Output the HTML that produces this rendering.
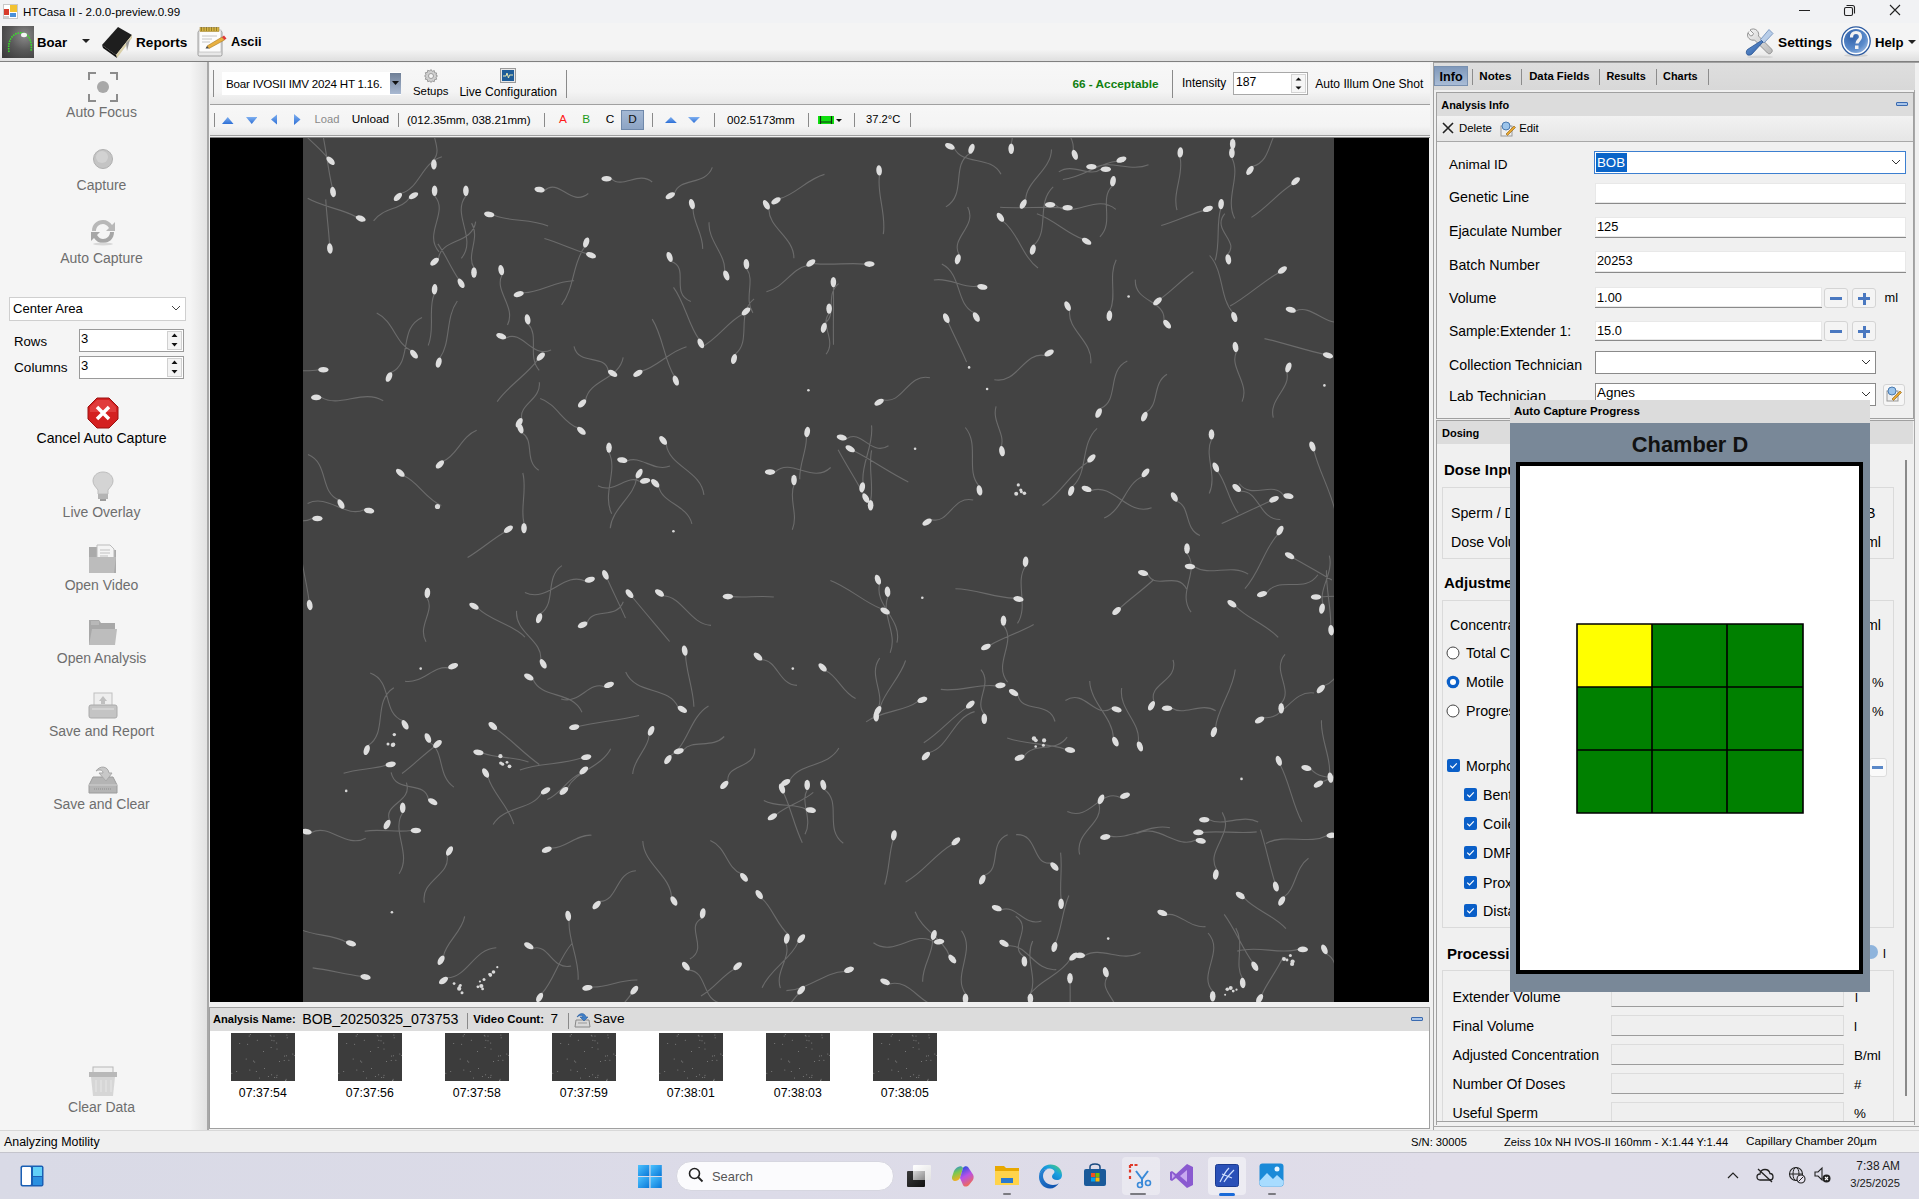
<!DOCTYPE html>
<html><head><meta charset="utf-8">
<style>
*{box-sizing:border-box;margin:0;padding:0}
html,body{width:1919px;height:1199px;overflow:hidden;background:#f0f0f0;font-family:"Liberation Sans",sans-serif;color:#000}
.a{position:absolute}
.t{position:absolute;white-space:nowrap;line-height:1}
.b{font-weight:bold}
</style></head><body>
<!-- title bar -->
<div class="a" style="left:0;top:0;width:1919px;height:23px;background:#f1f2f4"></div>
<!-- ribbon toolbar -->
<div class="a" style="left:0;top:23px;width:1919px;height:38px;background:linear-gradient(#f4f4f4 0,#f4f4f4 70%,#dfdfdf 100%)"></div>
<div class="a" style="left:0;top:61px;width:1919px;height:1px;background:#808080"></div>
<!-- left panel -->
<div class="a" style="left:0;top:62px;width:208px;height:1068px;background:linear-gradient(90deg,#f5f5f5 0,#f5f5f5 190px,#e2e2e2 207px)"></div>
<div class="a" style="left:207px;top:62px;width:2px;height:1068px;background:#a8a8a8"></div>
<!-- center toolbars -->
<div class="a" style="left:209px;top:62px;width:1222px;height:76px;background:#f0f0f0"></div>
<div class="a" style="left:210px;top:63px;width:1220px;height:41px;background:linear-gradient(#f7f7f7 0,#f4f4f4 70%,#e6e6e6 100%)"></div>
<div class="a" style="left:210px;top:104px;width:1220px;height:1px;background:#a0a0a0"></div>
<div class="a" style="left:210px;top:105px;width:1220px;height:30px;background:linear-gradient(#f7f7f7 0,#f4f4f4 70%,#e6e6e6 100%)"></div>
<div class="a" style="left:210px;top:135px;width:1220px;height:1px;background:#a0a0a0"></div>
<!-- image -->
<div class="a" style="left:210px;top:137px;width:1220px;height:1px;background:#808080"></div>
<div class="a" style="left:210px;top:138px;width:1219px;height:864px;background:#000"></div>
<div class="a" style="left:303px;top:138px;width:1031px;height:864px;background:#434343;overflow:hidden">
<svg width="1031" height="864" style="position:absolute;left:0;top:0"><defs><filter id="gl" x="-50%" y="-50%" width="200%" height="200%"><feGaussianBlur stdDeviation="0.7"/></filter><filter id="tb" x="-20%" y="-20%" width="140%" height="140%"><feGaussianBlur stdDeviation="0.4"/></filter></defs><path d="M24.1 19.3C15.3 7.8 -0.9 -3.5 -11.1 -16.8 M29.2 49.1C24.9 31.4 22.8 8.2 18.2 -11.1 M53.0 78.8C40.0 71.1 19.6 69.0 4.7 60.3 M26.5 105.5C25.8 93.3 23.6 76.2 22.7 61.4 M98.4 55.3C116.2 50.8 119.0 24.1 138.9 18.8 M106.2 60.2C99.3 71.4 79.4 69.8 70.6 82.9 M130.9 21.4C140.8 9.9 123.0 -6.5 133.9 -20.7 M131.6 57.8C146.3 74.2 119.9 95.5 136.0 113.8 M162.9 57.8C148.0 76.5 174.8 100.2 158.4 120.4 M191.1 77.3C206.2 83.7 228.1 80.8 245.1 87.9 M241.5 52.5C256.1 39.3 268.0 69.8 285.3 55.5 M135.5 120.5C137.9 100.1 169.5 106.6 172.7 83.7 M171.0 129.5C162.8 117.2 177.6 100.0 168.6 85.1 M155.6 141.0C149.1 132.1 142.9 117.2 134.9 105.9 M199.0 137.0C190.7 153.0 213.5 168.6 204.5 187.0 M220.5 154.8C236.1 155.3 253.3 142.4 271.1 142.7 M131.2 156.3C124.7 170.6 132.3 191.1 125.2 207.5 M107.8 212.4C93.0 205.9 90.3 182.8 73.7 175.0 M88.1 234.5C110.4 224.2 94.6 190.5 119.0 179.4 M137.0 219.8C148.0 204.6 142.2 179.7 154.3 163.0 M225.5 186.3C236.3 197.9 224.1 218.6 236.2 232.4 M202.9 199.9C219.9 191.4 228.4 220.9 248.1 212.0 M234.3 222.1C224.6 236.3 205.0 247.8 194.2 263.6 M15.4 231.8C-2.1 235.4 -24.7 228.9 -44.1 232.9 M18.2 259.4C36.7 270.5 60.1 250.5 80.2 262.8 M218.7 280.3C216.0 266.4 238.4 261.1 236.3 244.3 M276.1 588.3C293.8 584.3 316.8 582.0 336.1 577.5 M278.3 620.1C260.5 626.6 236.2 624.9 216.9 631.9 M277.0 635.7C265.6 639.8 257.9 656.0 244.3 661.5 M264.7 649.7C273.0 633.1 298.4 629.1 307.7 610.7 M346.0 597.3C346.0 610.0 330.3 620.8 329.7 636.1 M367.8 617.5C385.1 607.1 386.5 579.3 405.5 568.0 M380.5 611.9C389.7 601.1 409.6 610.9 421.2 598.5 M424.9 643.3C423.1 625.2 452.7 631.4 451.8 610.4 M486.9 642.0C496.6 624.4 525.1 629.4 535.9 610.1 M480.7 655.2C487.5 668.9 491.6 689.0 499.3 704.7 M504.2 651.9C496.8 664.1 510.2 681.4 502.0 696.2 M502.9 671.2C492.1 664.6 474.1 669.9 460.8 662.4 M473.7 676.3C482.6 668.3 499.3 663.9 510.3 654.3 M437.8 735.5C424.2 730.7 423.1 708.8 407.3 702.5 M368.4 758.6C367.5 737.6 340.6 726.0 339.8 703.1 M297.1 763.4C315.1 762.8 312.3 734.3 332.9 732.8 M459.0 760.7C469.0 769.0 474.0 786.8 485.6 796.9 M266.1 782.7C264.7 800.8 276.6 821.7 275.1 841.7 M398.9 780.3C381.4 789.0 406.3 810.2 386.9 821.1 M482.9 805.5C488.4 819.1 471.6 833.9 477.4 850.1 M495.0 804.4C488.3 820.9 466.6 831.4 459.1 849.7 M386.1 832.1C405.0 833.3 397.9 863.0 419.4 865.3 M430.7 831.4C420.2 836.8 410.7 851.0 398.0 857.9 M289.3 849.0C302.4 850.0 318.8 841.1 334.4 842.0 M328.1 856.1C320.4 867.6 306.3 880.2 297.2 893.6 M495.0 856.1C483.5 870.6 467.7 887.9 455.2 903.7 M573.2 573.4C584.9 558.0 563.8 537.7 576.7 520.2 M681.3 575.8C670.2 563.6 690.1 546.4 677.9 531.6 M626.4 614.5C646.4 608.9 649.8 579.7 671.6 573.6 M762.1 611.2C745.5 605.1 722.5 606.7 704.2 600.0 M721.3 618.0C730.0 603.8 753.5 615.1 764.1 599.1 M521.6 651.7C539.2 664.1 520.8 691.3 540.3 705.3 M590.1 702.2C586.0 714.3 586.3 732.2 581.7 746.7 M649.1 706.5C633.2 715.0 620.2 734.6 602.7 744.0 M681.5 737.2C699.1 731.1 684.9 704.6 704.7 696.8 M747.9 725.0C728.2 727.2 735.6 695.2 713.0 696.7 M758.1 760.8C756.4 747.8 759.5 729.9 757.6 714.6 M698.5 771.8C712.6 765.9 721.4 789.0 738.4 783.0 M752.7 804.2C758.5 791.5 759.3 772.4 765.9 757.5 M629.5 801.8C630.7 814.4 618.7 828.6 619.7 843.7 M631.1 804.2C611.9 790.4 591.5 820.0 570.5 804.8 M646.1 817.2C640.5 801.0 618.5 791.9 612.1 773.8 M705.3 807.9C724.4 805.7 731.8 833.8 753.3 831.6 M720.9 818.4C704.6 808.8 730.9 790.4 712.8 778.2 M541.3 833.5C522.1 833.7 504.4 852.4 483.4 852.6 M586.6 845.9C609.8 839.9 619.5 874.8 644.9 868.0 M767.0 845.2C767.6 861.1 766.6 882.0 767.2 899.9 M766.8 821.8C757.8 837.0 734.5 842.9 724.4 859.7 M662.5 855.7C648.9 836.9 673.4 813.1 658.5 792.7 M727.4 855.7C735.0 840.5 721.3 820.4 729.7 803.1 M810.3 599.1C809.6 579.6 787.5 564.5 786.7 543.1 M835.2 603.7C838.4 585.1 815.2 570.7 818.7 550.0 M912.6 589.3C914.4 570.7 930.3 551.9 932.2 531.5 M960.9 579.5C981.4 582.5 988.3 551.9 1011.1 555.0 M977.5 627.5C986.1 643.3 989.4 666.3 998.8 683.7 M1008.2 631.3C1021.8 647.0 1048.5 632.5 1063.5 649.8 M1026.6 634.7C1027.8 618.9 1017.2 600.1 1018.5 582.2 M1019.7 643.6C1033.0 639.0 1047.0 625.5 1062.4 619.9 M795.9 665.8C801.5 685.7 770.8 694.2 776.7 716.5 M817.3 659.4C797.0 650.0 787.1 683.8 764.3 673.6 M807.3 698.1C826.1 702.2 846.3 685.3 867.0 689.8 M906.3 681.7C920.2 689.2 939.1 675.7 955.2 683.9 M900.3 694.4C915.7 692.5 936.2 695.9 953.7 693.9 M892.8 702.0C873.2 712.0 855.2 684.5 833.7 695.6 M913.7 731.5C901.8 712.4 932.3 695.6 919.2 674.4 M971.6 743.6C967.0 728.7 962.7 708.6 957.5 691.7 M981.2 758.6C993.0 750.8 991.9 729.9 1005.5 720.3 M941.4 760.2C951.4 771.7 971.4 777.6 982.9 790.6 M1023.6 697.7C1006.2 707.1 981.9 695.1 962.9 705.4 M864.0 776.6C876.3 774.3 887.3 790.5 902.5 788.6 M781.9 817.4C798.1 807.9 819.3 825.0 837.5 814.6 M804.1 839.1C794.7 854.1 821.7 864.6 811.7 882.5 M949.3 823.9C939.6 810.9 932.0 791.0 921.2 776.4 M994.8 811.4C976.9 816.9 953.9 807.0 934.3 813.1 M1023.5 815.9C1038.6 823.2 1028.9 847.6 1046.0 856.6 M939.3 840.1C930.9 826.4 942.1 805.9 932.8 790.1 M909.7 853.2C894.3 836.1 922.0 814.0 905.1 795.0 M959.1 856.3C963.7 845.3 974.4 832.1 980.2 818.8 M308.6 40.8C319.6 51.4 335.5 32.4 349.2 44.0 M371.6 55.2C376.8 38.9 402.5 48.0 409.3 29.4 M390.2 70.9C389.1 82.7 400.5 96.4 399.6 110.9 M477.3 60.4C491.8 56.9 504.8 40.7 521.5 36.4 M465.9 71.1C465.4 89.9 491.2 99.3 490.9 120.3 M281.5 109.2C269.6 124.5 271.6 150.2 258.6 166.9 M283.3 115.5C271.4 112.0 255.6 104.8 241.4 100.5 M368.3 123.6C387.2 129.7 366.6 155.5 387.8 163.4 M421.6 132.7C423.0 116.7 404.7 102.5 406.1 84.2 M443.9 131.1C452.2 142.6 440.6 160.9 449.9 174.9 M503.7 127.8C489.0 130.4 480.4 150.3 463.4 153.7 M439.1 176.6C425.3 183.4 414.3 201.3 398.6 209.2 M395.7 200.8C385.5 187.0 381.8 164.6 370.5 149.3 M432.2 216.2C449.2 203.0 432.4 175.6 451.1 160.9 M305.3 232.9C302.3 215.2 275.6 228.5 271.0 208.3 M282.7 261.9C286.0 241.8 316.3 241.6 320.2 219.4 M339.2 232.9C353.7 229.2 366.9 213.2 383.5 208.7 M371.1 237.9C361.2 222.3 360.0 198.2 349.2 181.1 M651.4 10.5C660.2 28.0 687.9 16.8 698.0 36.3 M666.8 15.5C647.6 26.8 664.1 56.4 642.9 68.9 M708.2 5.8C713.0 -8.7 704.3 -28.2 709.6 -44.9 M770.1 12.1C772.5 -2.0 754.6 -13.9 756.8 -30.6 M576.5 37.4C573.5 55.1 583.6 76.6 580.3 96.1 M722.7 61.7C723.0 42.8 748.1 32.4 748.5 11.4 M752.1 66.8C770.1 82.2 793.1 54.5 812.8 71.4 M759.6 69.7C741.0 68.5 717.4 70.6 697.1 69.3 M700.2 83.4C714.8 94.1 719.0 118.1 735.0 130.0 M731.1 106.9C746.8 92.4 732.9 64.8 750.2 48.9 M656.1 116.5C646.7 99.9 674.8 88.2 664.7 69.1 M561.4 126.1C547.1 124.5 527.8 127.4 511.3 125.6 M530.4 149.1C530.8 166.1 530.1 188.0 530.5 206.8 M526.1 175.6C516.2 186.5 534.0 202.5 523.1 216.2 M522.1 184.9C534.3 176.5 521.8 156.4 535.6 145.6 M674.4 148.1C661.5 151.2 646.3 138.8 630.8 142.0 M670.8 174.6C652.3 165.6 659.2 136.1 638.8 126.0 M645.4 184.7C650.0 195.7 658.0 210.7 663.6 224.1 M766.7 172.7C763.9 192.3 790.7 203.6 787.7 225.4 M741.8 217.5C720.5 213.3 714.9 246.2 691.3 241.7 M580.4 261.7C600.3 266.8 604.5 234.6 627.0 239.8 M797.8 31.2C786.4 40.1 769.9 24.1 755.8 33.9 M793.4 28.8C808.4 22.1 828.4 34.2 845.5 26.8 M813.7 23.3C796.6 24.8 779.0 39.7 759.9 41.5 M809.2 48.2C795.7 61.0 811.8 84.1 796.9 98.8 M876.9 19.4C881.5 35.1 869.0 54.4 874.0 72.2 M929.7 1.0C940.7 -12.8 920.8 -31.6 933.0 -47.8 M928.9 19.9C938.3 37.9 921.5 60.9 931.7 80.6 M949.8 28.3C972.2 22.5 963.1 -11.5 987.7 -17.9 M988.8 46.5C975.8 54.3 963.2 70.3 948.4 79.4 M900.2 72.6C888.2 75.7 872.6 83.6 858.2 87.5 M917.7 71.0C913.0 85.5 917.4 105.7 912.2 122.3 M924.5 116.4C937.4 103.0 908.0 91.9 921.8 75.6 M779.3 100.8C764.8 96.1 750.4 81.2 733.9 75.7 M975.3 135.0C960.0 143.2 943.9 158.9 927.1 168.0 M806.9 172.8C814.2 158.7 805.0 138.1 813.2 121.8 M858.3 160.1C867.7 153.8 878.8 141.7 890.3 133.7 M860.9 182.3C863.0 162.1 830.6 164.4 832.4 141.6 M929.6 174.3C916.5 159.7 921.0 133.4 906.6 117.5 M992.6 173.0C1009.8 165.3 1023.1 191.1 1042.7 182.8 M933.4 213.9C925.9 229.7 947.2 245.5 939.1 263.6 M1020.2 216.1C1002.6 212.2 980.7 204.9 961.5 200.6 M983.7 234.1C988.4 250.0 965.4 261.1 970.3 279.6 M797.7 270.5C816.7 262.0 803.3 232.9 824.3 223.1 M843.4 274.1C856.5 267.2 849.0 245.2 864.0 236.3 M219.1 295.1C232.0 302.0 220.9 323.0 235.7 332.2 M140.5 322.9C153.6 318.2 158.4 298.2 173.7 292.2 M101.1 338.1C114.3 343.1 123.0 361.3 138.3 367.5 M35.5 361.7C16.6 354.4 26.0 325.1 5.0 316.6 M61.1 371.7C42.7 380.7 25.1 355.5 4.6 365.4 M9.4 380.5C-5.4 388.5 -25.3 374.1 -42.3 382.9 M201.3 394.2C190.6 400.4 177.4 411.8 164.6 419.5 M221.0 385.1C217.0 370.8 224.2 351.6 219.8 335.0 M5.9 462.0C4.3 448.0 -0.6 429.5 -2.5 413.2 M124.0 459.9C132.4 472.7 113.9 488.2 123.0 503.7 M175.4 470.7C186.9 482.4 208.9 485.9 221.9 499.1 M237.8 475.5C253.5 465.2 241.4 439.5 258.9 427.6 M237.7 521.5C239.8 502.2 211.6 494.6 213.6 472.9 M145.4 529.9C130.9 527.0 119.1 546.1 102.0 543.3 M230.1 541.5C238.6 561.3 269.5 552.4 279.0 574.2 M274.6 289.6C260.6 285.6 253.4 265.7 237.2 260.6 M306.0 314.6C315.1 332.8 298.8 356.0 308.7 375.8 M363.3 306.2C365.9 328.6 398.3 332.5 400.9 356.9 M324.2 323.0C337.3 316.8 351.2 334.5 367.0 328.0 M333.6 339.9C331.9 358.1 309.1 369.9 307.2 390.2 M337.1 343.6C323.9 335.2 311.0 356.9 295.0 347.8 M355.7 348.7C359.1 365.3 384.5 367.0 388.9 385.8 M503.3 298.9C504.4 311.1 495.9 326.6 496.8 341.3 M472.0 334.1C488.2 318.7 509.5 346.5 527.7 329.5 M491.0 347.0C485.2 359.4 495.7 376.8 489.3 391.7 M282.0 443.0C260.6 433.2 245.3 465.3 221.9 454.5 M304.6 441.5C309.3 452.1 316.7 467.1 322.5 480.1 M329.7 459.5C340.4 472.5 354.6 489.1 366.6 503.5 M360.6 457.8C379.6 459.0 386.8 485.9 408.0 487.4 M284.2 484.8C289.1 468.6 313.5 482.2 320.3 463.8 M429.9 458.6C441.0 460.2 457.0 457.2 470.8 459.0 M382.6 517.5C383.0 532.6 390.4 551.5 390.9 568.7 M458.8 521.8C474.4 521.8 475.7 546.6 494.0 547.4 M301.3 548.7C286.0 542.7 276.3 567.0 258.2 560.9 M375.0 568.9C365.6 547.8 332.8 557.2 322.7 534.0 M543.6 300.8C558.4 290.3 567.8 318.9 585.5 307.7 M551.6 313.3C568.1 321.5 587.3 335.1 605.3 343.9 M560.1 344.3C557.6 326.7 571.2 306.9 568.5 287.3 M560.3 355.7C553.5 342.9 543.0 326.5 535.1 311.7 M567.6 362.3C570.9 348.1 565.1 328.8 568.6 312.4 M698.2 308.3C702.6 296.5 688.5 282.9 693.1 268.3 M675.6 347.5C662.5 331.9 676.7 306.6 662.3 289.5 M769.9 348.2C785.5 334.0 777.1 305.7 794.1 290.3 M628.4 381.6C646.1 386.6 649.7 357.1 670.2 362.0 M722.1 428.7C711.8 444.6 725.9 467.7 714.5 485.4 M710.5 460.1C692.9 460.1 671.9 450.8 652.4 450.8 M576.6 446.4C571.3 467.5 599.7 481.6 593.9 504.6 M584.9 458.7C577.8 475.8 595.0 495.7 587.2 514.7 M577.7 470.5C561.6 464.6 545.3 449.0 527.4 442.4 M700.5 487.6C714.2 504.1 689.5 525.7 704.6 544.2 M687.5 506.9C699.3 500.3 716.8 494.1 730.7 486.4 M523.1 532.9C534.1 537.3 539.4 554.4 552.6 560.4 M692.4 547.9C676.2 545.3 656.0 554.2 637.8 551.4 M714.9 557.1C718.7 575.8 746.8 562.4 752.0 583.5 M614.6 563.6C601.2 573.9 578.2 572.4 563.1 583.9 M663.5 569.9C649.8 578.5 636.2 595.1 620.8 604.8 M577.4 568.3C581.8 553.5 597.3 539.4 602.6 522.5 M784.9 324.0C768.4 334.0 757.3 356.7 739.4 367.5 M839.2 338.7C822.3 345.8 820.1 371.9 801.2 380.1 M788.3 352.6C811.0 344.7 823.9 378.6 848.6 369.7 M908.5 301.4C900.9 317.1 914.6 337.8 906.2 355.6 M915.0 333.8C923.2 344.1 925.6 362.7 935.2 375.1 M873.8 363.2C887.8 368.0 880.7 390.7 896.9 397.4 M937.6 353.2C956.4 352.2 955.9 382.0 977.3 381.5 M980.5 357.3C970.1 342.3 948.6 362.2 936.1 345.5 M966.4 363.4C952.6 369.6 934.5 378.5 918.7 385.6 M1011.1 313.1C1015.4 331.3 1027.1 352.1 1031.8 371.8 M974.5 396.8C961.3 410.9 956.3 435.4 941.9 450.6 M884.0 415.5C897.6 432.8 873.2 455.0 888.1 474.1 M891.9 429.0C906.7 438.6 928.4 425.5 945.2 436.1 M844.9 436.3C852.1 452.5 874.0 432.7 883.5 450.9 M817.5 469.7C826.1 461.3 840.2 451.6 850.8 441.5 M990.9 420.2C1001.5 426.1 1016.2 434.9 1028.9 442.1 M963.8 454.9C975.3 437.2 1001.8 456.4 1014.9 436.8 M1018.0 459.0C1036.4 456.5 1059.7 461.1 1079.8 458.3 M933.0 468.6C943.5 479.8 963.1 486.6 975.2 499.3 M1019.9 465.6C1015.5 451.0 1030.9 434.7 1026.3 417.6 M1027.7 487.2C1028.2 471.1 1022.9 450.4 1023.5 432.3 M1021.4 547.5C1035.5 543.2 1039.4 521.6 1055.7 516.1 M808.8 570.2C792.1 581.8 781.8 550.0 762.4 562.5 M851.0 563.5C844.7 545.2 876.3 543.0 870.0 521.8 M869.1 570.2C881.1 578.4 898.1 563.7 912.7 572.7 M978.2 565.2C990.9 551.4 968.0 532.5 982.0 516.3 M99.6 582.5C78.7 575.1 90.3 543.3 67.2 535.1 M65.4 607.3C85.1 594.6 69.2 563.6 90.8 549.8 M127.0 604.6C141.7 613.6 134.4 638.4 150.9 649.1 M130.7 609.2C121.6 615.7 110.2 627.4 99.0 635.5 M82.8 627.3C71.5 631.2 54.4 630.8 40.6 635.3 M193.6 591.2C206.9 600.5 221.4 616.0 236.3 626.5 M180.3 615.3C192.5 620.1 210.9 618.6 225.5 624.1 M185.1 639.2C189.1 654.7 206.0 668.7 210.8 686.2 M238.3 655.4C228.7 672.4 200.9 667.8 190.1 686.6 M125.4 661.2C122.0 641.5 92.8 656.6 88.1 634.3 M99.7 674.7C87.6 692.8 109.4 715.9 96.1 735.7 M86.6 682.2C79.9 665.6 109.9 664.3 103.4 644.6 M107.9 692.5C95.0 694.9 77.0 690.6 61.7 693.2 M8.5 694.6C26.3 684.8 42.7 710.9 62.7 700.2 M144.0 717.3C148.3 737.2 116.9 742.3 121.4 764.7 M248.5 710.0C261.2 711.4 273.2 696.2 288.5 697.2 M43.2 804.1C29.6 796.1 8.2 798.2 -7.3 789.3 M57.5 838.2C43.9 836.5 25.6 832.0 9.7 829.9 M140.6 817.9C142.5 804.6 159.0 794.0 161.7 778.3 M144.6 839.8C164.6 839.0 171.2 810.6 193.3 809.7 M230.1 810.3C246.0 805.4 249.2 832.6 268.1 828.0 M239.1 855.1C251.2 842.1 256.1 819.3 269.4 805.0" stroke="#8c8c8c" stroke-width="1.1" fill="none" opacity="0.55" filter="url(#tb)"/><g fill="#dedede" filter="url(#gl)"><ellipse cx="27.6" cy="22.8" rx="5.2" ry="2.8" transform="rotate(-135 27.6 22.8)"/><ellipse cx="30.0" cy="54.0" rx="5.2" ry="2.8" transform="rotate(-100 30.0 54.0)"/><ellipse cx="57.7" cy="80.5" rx="5.2" ry="2.8" transform="rotate(-160 57.7 80.5)"/><ellipse cx="26.9" cy="110.5" rx="5.2" ry="2.8" transform="rotate(-95 26.9 110.5)"/><ellipse cx="94.9" cy="58.9" rx="5.2" ry="2.8" transform="rotate(-45 94.9 58.9)"/><ellipse cx="110.5" cy="57.7" rx="5.2" ry="2.8" transform="rotate(150 110.5 57.7)"/><ellipse cx="130.9" cy="26.4" rx="5.2" ry="2.8" transform="rotate(-90 130.9 26.4)"/><ellipse cx="131.6" cy="52.8" rx="5.2" ry="2.8" transform="rotate(90 131.6 52.8)"/><ellipse cx="162.9" cy="52.8" rx="5.2" ry="2.8" transform="rotate(90 162.9 52.8)"/><ellipse cx="186.2" cy="76.4" rx="5.2" ry="2.8" transform="rotate(10 186.2 76.4)"/><ellipse cx="236.6" cy="51.6" rx="5.2" ry="2.8" transform="rotate(10 236.6 51.6)"/><ellipse cx="131.6" cy="123.7" rx="5.2" ry="2.8" transform="rotate(-40 131.6 123.7)"/><ellipse cx="171.0" cy="134.5" rx="5.2" ry="2.8" transform="rotate(-90 171.0 134.5)"/><ellipse cx="158.1" cy="145.3" rx="5.2" ry="2.8" transform="rotate(-120 158.1 145.3)"/><ellipse cx="198.2" cy="132.1" rx="5.2" ry="2.8" transform="rotate(80 198.2 132.1)"/><ellipse cx="215.7" cy="156.1" rx="5.2" ry="2.8" transform="rotate(-15 215.7 156.1)"/><ellipse cx="131.6" cy="151.3" rx="5.2" ry="2.8" transform="rotate(95 131.6 151.3)"/><ellipse cx="111.0" cy="216.2" rx="5.2" ry="2.8" transform="rotate(-130 111.0 216.2)"/><ellipse cx="86.0" cy="239.0" rx="5.2" ry="2.8" transform="rotate(-65 86.0 239.0)"/><ellipse cx="135.7" cy="224.6" rx="5.2" ry="2.8" transform="rotate(-75 135.7 224.6)"/><ellipse cx="224.6" cy="181.4" rx="5.2" ry="2.8" transform="rotate(80 224.6 181.4)"/><ellipse cx="198.2" cy="198.2" rx="5.2" ry="2.8" transform="rotate(20 198.2 198.2)"/><ellipse cx="237.8" cy="218.6" rx="5.2" ry="2.8" transform="rotate(135 237.8 218.6)"/><ellipse cx="20.4" cy="231.8" rx="5.2" ry="2.8" transform="rotate(180 20.4 231.8)"/><ellipse cx="13.2" cy="259.4" rx="5.2" ry="2.8" transform="rotate(0 13.2 259.4)"/><ellipse cx="216.2" cy="284.7" rx="5.2" ry="2.8" transform="rotate(-60 216.2 284.7)"/><ellipse cx="271.2" cy="589.2" rx="5.2" ry="2.8" transform="rotate(-10 271.2 589.2)"/><ellipse cx="283.2" cy="619.2" rx="5.2" ry="2.8" transform="rotate(170 283.2 619.2)"/><ellipse cx="280.8" cy="632.4" rx="5.2" ry="2.8" transform="rotate(140 280.8 632.4)"/><ellipse cx="260.9" cy="652.9" rx="5.2" ry="2.8" transform="rotate(-40 260.9 652.9)"/><ellipse cx="348.1" cy="592.8" rx="5.2" ry="2.8" transform="rotate(115 348.1 592.8)"/><ellipse cx="364.9" cy="621.6" rx="5.2" ry="2.8" transform="rotate(-55 364.9 621.6)"/><ellipse cx="375.7" cy="613.2" rx="5.2" ry="2.8" transform="rotate(-15 375.7 613.2)"/><ellipse cx="421.3" cy="646.9" rx="5.2" ry="2.8" transform="rotate(-45 421.3 646.9)"/><ellipse cx="482.6" cy="644.5" rx="5.2" ry="2.8" transform="rotate(-30 482.6 644.5)"/><ellipse cx="479.0" cy="650.5" rx="5.2" ry="2.8" transform="rotate(70 479.0 650.5)"/><ellipse cx="504.2" cy="646.9" rx="5.2" ry="2.8" transform="rotate(90 504.2 646.9)"/><ellipse cx="507.8" cy="672.1" rx="5.2" ry="2.8" transform="rotate(-170 507.8 672.1)"/><ellipse cx="469.4" cy="678.8" rx="5.2" ry="2.8" transform="rotate(-30 469.4 678.8)"/><ellipse cx="441.0" cy="739.3" rx="5.2" ry="2.8" transform="rotate(-130 441.0 739.3)"/><ellipse cx="370.9" cy="762.9" rx="5.2" ry="2.8" transform="rotate(-120 370.9 762.9)"/><ellipse cx="293.6" cy="767.0" rx="5.2" ry="2.8" transform="rotate(-45 293.6 767.0)"/><ellipse cx="456.2" cy="756.6" rx="5.2" ry="2.8" transform="rotate(55 456.2 756.6)"/><ellipse cx="265.2" cy="777.8" rx="5.2" ry="2.8" transform="rotate(80 265.2 777.8)"/><ellipse cx="399.7" cy="775.4" rx="5.2" ry="2.8" transform="rotate(100 399.7 775.4)"/><ellipse cx="483.8" cy="800.6" rx="5.2" ry="2.8" transform="rotate(100 483.8 800.6)"/><ellipse cx="498.2" cy="800.6" rx="5.2" ry="2.8" transform="rotate(130 498.2 800.6)"/><ellipse cx="382.9" cy="828.2" rx="5.2" ry="2.8" transform="rotate(50 382.9 828.2)"/><ellipse cx="434.6" cy="828.2" rx="5.2" ry="2.8" transform="rotate(140 434.6 828.2)"/><ellipse cx="284.4" cy="849.8" rx="5.2" ry="2.8" transform="rotate(-10 284.4 849.8)"/><ellipse cx="331.3" cy="852.2" rx="5.2" ry="2.8" transform="rotate(130 331.3 852.2)"/><ellipse cx="498.2" cy="852.2" rx="5.2" ry="2.8" transform="rotate(130 498.2 852.2)"/><ellipse cx="573.2" cy="578.4" rx="5.2" ry="2.8" transform="rotate(-90 573.2 578.4)"/><ellipse cx="681.3" cy="580.8" rx="5.2" ry="2.8" transform="rotate(-90 681.3 580.8)"/><ellipse cx="622.9" cy="618.0" rx="5.2" ry="2.8" transform="rotate(-45 622.9 618.0)"/><ellipse cx="767.0" cy="612.0" rx="5.2" ry="2.8" transform="rotate(-170 767.0 612.0)"/><ellipse cx="716.6" cy="619.7" rx="5.2" ry="2.8" transform="rotate(-20 716.6 619.7)"/><ellipse cx="520.3" cy="646.9" rx="5.2" ry="2.8" transform="rotate(75 520.3 646.9)"/><ellipse cx="590.9" cy="697.3" rx="5.2" ry="2.8" transform="rotate(100 590.9 697.3)"/><ellipse cx="652.9" cy="703.3" rx="5.2" ry="2.8" transform="rotate(140 652.9 703.3)"/><ellipse cx="679.3" cy="741.7" rx="5.2" ry="2.8" transform="rotate(-65 679.3 741.7)"/><ellipse cx="751.4" cy="728.5" rx="5.2" ry="2.8" transform="rotate(-135 751.4 728.5)"/><ellipse cx="758.1" cy="765.8" rx="5.2" ry="2.8" transform="rotate(-90 758.1 765.8)"/><ellipse cx="693.8" cy="770.1" rx="5.2" ry="2.8" transform="rotate(20 693.8 770.1)"/><ellipse cx="751.4" cy="809.0" rx="5.2" ry="2.8" transform="rotate(-75 751.4 809.0)"/><ellipse cx="630.8" cy="797.0" rx="5.2" ry="2.8" transform="rotate(105 630.8 797.0)"/><ellipse cx="636.1" cy="803.7" rx="5.2" ry="2.8" transform="rotate(175 636.1 803.7)"/><ellipse cx="649.3" cy="821.0" rx="5.2" ry="2.8" transform="rotate(-130 649.3 821.0)"/><ellipse cx="701.0" cy="805.4" rx="5.2" ry="2.8" transform="rotate(30 701.0 805.4)"/><ellipse cx="721.4" cy="823.4" rx="5.2" ry="2.8" transform="rotate(-95 721.4 823.4)"/><ellipse cx="546.0" cy="831.8" rx="5.2" ry="2.8" transform="rotate(160 546.0 831.8)"/><ellipse cx="582.1" cy="843.8" rx="5.2" ry="2.8" transform="rotate(25 582.1 843.8)"/><ellipse cx="767.0" cy="840.2" rx="5.2" ry="2.8" transform="rotate(90 767.0 840.2)"/><ellipse cx="770.6" cy="818.6" rx="5.2" ry="2.8" transform="rotate(140 770.6 818.6)"/><ellipse cx="662.5" cy="860.7" rx="5.2" ry="2.8" transform="rotate(-90 662.5 860.7)"/><ellipse cx="727.4" cy="860.7" rx="5.2" ry="2.8" transform="rotate(-90 727.4 860.7)"/><ellipse cx="812.4" cy="603.6" rx="5.2" ry="2.8" transform="rotate(-115 812.4 603.6)"/><ellipse cx="836.9" cy="608.4" rx="5.2" ry="2.8" transform="rotate(-110 836.9 608.4)"/><ellipse cx="910.9" cy="594.0" rx="5.2" ry="2.8" transform="rotate(-70 910.9 594.0)"/><ellipse cx="956.6" cy="582.0" rx="5.2" ry="2.8" transform="rotate(-30 956.6 582.0)"/><ellipse cx="975.8" cy="622.8" rx="5.2" ry="2.8" transform="rotate(70 975.8 622.8)"/><ellipse cx="1003.4" cy="630.0" rx="5.2" ry="2.8" transform="rotate(15 1003.4 630.0)"/><ellipse cx="1027.4" cy="639.7" rx="5.2" ry="2.8" transform="rotate(-100 1027.4 639.7)"/><ellipse cx="1015.4" cy="646.1" rx="5.2" ry="2.8" transform="rotate(-30 1015.4 646.1)"/><ellipse cx="798.0" cy="661.3" rx="5.2" ry="2.8" transform="rotate(115 798.0 661.3)"/><ellipse cx="822.0" cy="657.7" rx="5.2" ry="2.8" transform="rotate(160 822.0 657.7)"/><ellipse cx="802.3" cy="699.0" rx="5.2" ry="2.8" transform="rotate(-10 802.3 699.0)"/><ellipse cx="901.3" cy="681.7" rx="5.2" ry="2.8" transform="rotate(0 901.3 681.7)"/><ellipse cx="895.3" cy="694.4" rx="5.2" ry="2.8" transform="rotate(0 895.3 694.4)"/><ellipse cx="897.7" cy="702.8" rx="5.2" ry="2.8" transform="rotate(-170 897.7 702.8)"/><ellipse cx="912.8" cy="736.5" rx="5.2" ry="2.8" transform="rotate(-80 912.8 736.5)"/><ellipse cx="972.9" cy="748.5" rx="5.2" ry="2.8" transform="rotate(-105 972.9 748.5)"/><ellipse cx="978.7" cy="762.9" rx="5.2" ry="2.8" transform="rotate(-60 978.7 762.9)"/><ellipse cx="937.3" cy="757.4" rx="5.2" ry="2.8" transform="rotate(35 937.3 757.4)"/><ellipse cx="1028.6" cy="697.3" rx="5.2" ry="2.8" transform="rotate(175 1028.6 697.3)"/><ellipse cx="859.3" cy="774.9" rx="5.2" ry="2.8" transform="rotate(20 859.3 774.9)"/><ellipse cx="776.9" cy="817.4" rx="5.2" ry="2.8" transform="rotate(0 776.9 817.4)"/><ellipse cx="802.8" cy="834.2" rx="5.2" ry="2.8" transform="rotate(75 802.8 834.2)"/><ellipse cx="951.8" cy="828.2" rx="5.2" ry="2.8" transform="rotate(-120 951.8 828.2)"/><ellipse cx="999.8" cy="811.4" rx="5.2" ry="2.8" transform="rotate(180 999.8 811.4)"/><ellipse cx="1021.4" cy="811.4" rx="5.2" ry="2.8" transform="rotate(65 1021.4 811.4)"/><ellipse cx="939.7" cy="845.0" rx="5.2" ry="2.8" transform="rotate(-95 939.7 845.0)"/><ellipse cx="909.7" cy="858.2" rx="5.2" ry="2.8" transform="rotate(-90 909.7 858.2)"/><ellipse cx="956.6" cy="860.7" rx="5.2" ry="2.8" transform="rotate(-60 956.6 860.7)"/><ellipse cx="303.6" cy="40.8" rx="5.2" ry="2.8" transform="rotate(0 303.6 40.8)"/><ellipse cx="367.3" cy="57.7" rx="5.2" ry="2.8" transform="rotate(-30 367.3 57.7)"/><ellipse cx="388.9" cy="66.1" rx="5.2" ry="2.8" transform="rotate(75 388.9 66.1)"/><ellipse cx="473.0" cy="62.9" rx="5.2" ry="2.8" transform="rotate(-30 473.0 62.9)"/><ellipse cx="463.4" cy="66.8" rx="5.2" ry="2.8" transform="rotate(60 463.4 66.8)"/><ellipse cx="283.2" cy="104.5" rx="5.2" ry="2.8" transform="rotate(110 283.2 104.5)"/><ellipse cx="288.0" cy="117.2" rx="5.2" ry="2.8" transform="rotate(-160 288.0 117.2)"/><ellipse cx="366.6" cy="118.9" rx="5.2" ry="2.8" transform="rotate(70 366.6 118.9)"/><ellipse cx="423.3" cy="137.4" rx="5.2" ry="2.8" transform="rotate(-110 423.3 137.4)"/><ellipse cx="443.4" cy="126.1" rx="5.2" ry="2.8" transform="rotate(85 443.4 126.1)"/><ellipse cx="507.8" cy="124.9" rx="5.2" ry="2.8" transform="rotate(145 507.8 124.9)"/><ellipse cx="443.0" cy="173.4" rx="5.2" ry="2.8" transform="rotate(140 443.0 173.4)"/><ellipse cx="397.8" cy="205.4" rx="5.2" ry="2.8" transform="rotate(-115 397.8 205.4)"/><ellipse cx="431.0" cy="221.0" rx="5.2" ry="2.8" transform="rotate(-75 431.0 221.0)"/><ellipse cx="309.6" cy="235.4" rx="5.2" ry="2.8" transform="rotate(-150 309.6 235.4)"/><ellipse cx="279.1" cy="265.4" rx="5.2" ry="2.8" transform="rotate(-45 279.1 265.4)"/><ellipse cx="334.9" cy="235.4" rx="5.2" ry="2.8" transform="rotate(-30 334.9 235.4)"/><ellipse cx="372.8" cy="242.6" rx="5.2" ry="2.8" transform="rotate(-110 372.8 242.6)"/><ellipse cx="646.9" cy="8.4" rx="5.2" ry="2.8" transform="rotate(25 646.9 8.4)"/><ellipse cx="668.5" cy="10.8" rx="5.2" ry="2.8" transform="rotate(110 668.5 10.8)"/><ellipse cx="708.2" cy="10.8" rx="5.2" ry="2.8" transform="rotate(-90 708.2 10.8)"/><ellipse cx="771.8" cy="16.8" rx="5.2" ry="2.8" transform="rotate(-110 771.8 16.8)"/><ellipse cx="576.1" cy="32.4" rx="5.2" ry="2.8" transform="rotate(85 576.1 32.4)"/><ellipse cx="720.2" cy="66.1" rx="5.2" ry="2.8" transform="rotate(-60 720.2 66.1)"/><ellipse cx="747.1" cy="66.8" rx="5.2" ry="2.8" transform="rotate(0 747.1 66.8)"/><ellipse cx="764.6" cy="69.7" rx="5.2" ry="2.8" transform="rotate(180 764.6 69.7)"/><ellipse cx="697.4" cy="79.3" rx="5.2" ry="2.8" transform="rotate(55 697.4 79.3)"/><ellipse cx="729.8" cy="111.7" rx="5.2" ry="2.8" transform="rotate(-75 729.8 111.7)"/><ellipse cx="654.8" cy="121.3" rx="5.2" ry="2.8" transform="rotate(-75 654.8 121.3)"/><ellipse cx="566.4" cy="126.1" rx="5.2" ry="2.8" transform="rotate(180 566.4 126.1)"/><ellipse cx="530.4" cy="144.1" rx="5.2" ry="2.8" transform="rotate(90 530.4 144.1)"/><ellipse cx="526.1" cy="170.6" rx="5.2" ry="2.8" transform="rotate(90 526.1 170.6)"/><ellipse cx="520.8" cy="189.8" rx="5.2" ry="2.8" transform="rotate(-75 520.8 189.8)"/><ellipse cx="679.3" cy="148.9" rx="5.2" ry="2.8" transform="rotate(-170 679.3 148.9)"/><ellipse cx="673.3" cy="179.0" rx="5.2" ry="2.8" transform="rotate(-120 673.3 179.0)"/><ellipse cx="643.3" cy="180.2" rx="5.2" ry="2.8" transform="rotate(65 643.3 180.2)"/><ellipse cx="764.6" cy="168.1" rx="5.2" ry="2.8" transform="rotate(65 764.6 168.1)"/><ellipse cx="746.1" cy="215.0" rx="5.2" ry="2.8" transform="rotate(150 746.1 215.0)"/><ellipse cx="576.1" cy="264.2" rx="5.2" ry="2.8" transform="rotate(-30 576.1 264.2)"/><ellipse cx="802.8" cy="31.2" rx="5.2" ry="2.8" transform="rotate(180 802.8 31.2)"/><ellipse cx="788.4" cy="28.8" rx="5.2" ry="2.8" transform="rotate(0 788.4 28.8)"/><ellipse cx="818.4" cy="21.6" rx="5.2" ry="2.8" transform="rotate(160 818.4 21.6)"/><ellipse cx="810.0" cy="43.2" rx="5.2" ry="2.8" transform="rotate(100 810.0 43.2)"/><ellipse cx="877.3" cy="14.4" rx="5.2" ry="2.8" transform="rotate(95 877.3 14.4)"/><ellipse cx="929.7" cy="6.0" rx="5.2" ry="2.8" transform="rotate(-90 929.7 6.0)"/><ellipse cx="928.9" cy="14.9" rx="5.2" ry="2.8" transform="rotate(90 928.9 14.9)"/><ellipse cx="947.0" cy="32.4" rx="5.2" ry="2.8" transform="rotate(-55 947.0 32.4)"/><ellipse cx="992.6" cy="43.2" rx="5.2" ry="2.8" transform="rotate(140 992.6 43.2)"/><ellipse cx="904.9" cy="70.9" rx="5.2" ry="2.8" transform="rotate(160 904.9 70.9)"/><ellipse cx="918.1" cy="66.1" rx="5.2" ry="2.8" transform="rotate(95 918.1 66.1)"/><ellipse cx="925.3" cy="121.3" rx="5.2" ry="2.8" transform="rotate(-100 925.3 121.3)"/><ellipse cx="783.6" cy="103.3" rx="5.2" ry="2.8" transform="rotate(-150 783.6 103.3)"/><ellipse cx="979.4" cy="132.1" rx="5.2" ry="2.8" transform="rotate(145 979.4 132.1)"/><ellipse cx="806.4" cy="177.8" rx="5.2" ry="2.8" transform="rotate(-85 806.4 177.8)"/><ellipse cx="854.5" cy="163.3" rx="5.2" ry="2.8" transform="rotate(-40 854.5 163.3)"/><ellipse cx="864.1" cy="186.2" rx="5.2" ry="2.8" transform="rotate(-130 864.1 186.2)"/><ellipse cx="931.3" cy="179.0" rx="5.2" ry="2.8" transform="rotate(-110 931.3 179.0)"/><ellipse cx="987.8" cy="171.8" rx="5.2" ry="2.8" transform="rotate(15 987.8 171.8)"/><ellipse cx="932.5" cy="209.0" rx="5.2" ry="2.8" transform="rotate(80 932.5 209.0)"/><ellipse cx="1025.0" cy="217.4" rx="5.2" ry="2.8" transform="rotate(-165 1025.0 217.4)"/><ellipse cx="985.4" cy="229.4" rx="5.2" ry="2.8" transform="rotate(110 985.4 229.4)"/><ellipse cx="795.6" cy="275.0" rx="5.2" ry="2.8" transform="rotate(-65 795.6 275.0)"/><ellipse cx="841.3" cy="278.6" rx="5.2" ry="2.8" transform="rotate(-65 841.3 278.6)"/><ellipse cx="217.4" cy="290.4" rx="5.2" ry="2.8" transform="rotate(70 217.4 290.4)"/><ellipse cx="136.9" cy="326.4" rx="5.2" ry="2.8" transform="rotate(-45 136.9 326.4)"/><ellipse cx="97.3" cy="334.8" rx="5.2" ry="2.8" transform="rotate(40 97.3 334.8)"/><ellipse cx="38.0" cy="366.1" rx="5.2" ry="2.8" transform="rotate(-120 38.0 366.1)"/><ellipse cx="66.1" cy="372.6" rx="5.2" ry="2.8" transform="rotate(-170 66.1 372.6)"/><ellipse cx="14.4" cy="380.5" rx="5.2" ry="2.8" transform="rotate(180 14.4 380.5)"/><ellipse cx="205.4" cy="391.3" rx="5.2" ry="2.8" transform="rotate(145 205.4 391.3)"/><ellipse cx="221.0" cy="390.1" rx="5.2" ry="2.8" transform="rotate(-90 221.0 390.1)"/><ellipse cx="6.7" cy="467.0" rx="5.2" ry="2.8" transform="rotate(-100 6.7 467.0)"/><ellipse cx="124.4" cy="454.9" rx="5.2" ry="2.8" transform="rotate(95 124.4 454.9)"/><ellipse cx="171.0" cy="468.2" rx="5.2" ry="2.8" transform="rotate(30 171.0 468.2)"/><ellipse cx="236.1" cy="480.2" rx="5.2" ry="2.8" transform="rotate(-70 236.1 480.2)"/><ellipse cx="240.2" cy="525.8" rx="5.2" ry="2.8" transform="rotate(-120 240.2 525.8)"/><ellipse cx="150.1" cy="528.2" rx="5.2" ry="2.8" transform="rotate(160 150.1 528.2)"/><ellipse cx="225.8" cy="539.0" rx="5.2" ry="2.8" transform="rotate(30 225.8 539.0)"/><ellipse cx="278.4" cy="292.8" rx="5.2" ry="2.8" transform="rotate(-140 278.4 292.8)"/><ellipse cx="306.0" cy="309.6" rx="5.2" ry="2.8" transform="rotate(90 306.0 309.6)"/><ellipse cx="360.1" cy="302.4" rx="5.2" ry="2.8" transform="rotate(50 360.1 302.4)"/><ellipse cx="319.3" cy="322.1" rx="5.2" ry="2.8" transform="rotate(10 319.3 322.1)"/><ellipse cx="336.1" cy="335.6" rx="5.2" ry="2.8" transform="rotate(120 336.1 335.6)"/><ellipse cx="342.1" cy="342.8" rx="5.2" ry="2.8" transform="rotate(170 342.1 342.8)"/><ellipse cx="352.2" cy="345.2" rx="5.2" ry="2.8" transform="rotate(45 352.2 345.2)"/><ellipse cx="504.2" cy="294.0" rx="5.2" ry="2.8" transform="rotate(100 504.2 294.0)"/><ellipse cx="467.0" cy="334.1" rx="5.2" ry="2.8" transform="rotate(0 467.0 334.1)"/><ellipse cx="491.0" cy="342.0" rx="5.2" ry="2.8" transform="rotate(90 491.0 342.0)"/><ellipse cx="286.8" cy="441.7" rx="5.2" ry="2.8" transform="rotate(165 286.8 441.7)"/><ellipse cx="302.4" cy="436.9" rx="5.2" ry="2.8" transform="rotate(65 302.4 436.9)"/><ellipse cx="326.5" cy="455.7" rx="5.2" ry="2.8" transform="rotate(50 326.5 455.7)"/><ellipse cx="356.5" cy="454.9" rx="5.2" ry="2.8" transform="rotate(35 356.5 454.9)"/><ellipse cx="279.6" cy="486.9" rx="5.2" ry="2.8" transform="rotate(-25 279.6 486.9)"/><ellipse cx="424.9" cy="458.6" rx="5.2" ry="2.8" transform="rotate(0 424.9 458.6)"/><ellipse cx="381.7" cy="512.6" rx="5.2" ry="2.8" transform="rotate(80 381.7 512.6)"/><ellipse cx="455.0" cy="518.6" rx="5.2" ry="2.8" transform="rotate(40 455.0 518.6)"/><ellipse cx="306.0" cy="546.9" rx="5.2" ry="2.8" transform="rotate(160 306.0 546.9)"/><ellipse cx="379.3" cy="571.4" rx="5.2" ry="2.8" transform="rotate(-150 379.3 571.4)"/><ellipse cx="538.8" cy="299.5" rx="5.2" ry="2.8" transform="rotate(15 538.8 299.5)"/><ellipse cx="547.2" cy="310.8" rx="5.2" ry="2.8" transform="rotate(30 547.2 310.8)"/><ellipse cx="559.2" cy="349.3" rx="5.2" ry="2.8" transform="rotate(-80 559.2 349.3)"/><ellipse cx="562.8" cy="360.1" rx="5.2" ry="2.8" transform="rotate(-120 562.8 360.1)"/><ellipse cx="567.6" cy="367.3" rx="5.2" ry="2.8" transform="rotate(-90 567.6 367.3)"/><ellipse cx="699.0" cy="313.2" rx="5.2" ry="2.8" transform="rotate(-100 699.0 313.2)"/><ellipse cx="676.5" cy="352.4" rx="5.2" ry="2.8" transform="rotate(-100 676.5 352.4)"/><ellipse cx="768.2" cy="352.9" rx="5.2" ry="2.8" transform="rotate(-70 768.2 352.9)"/><ellipse cx="624.1" cy="384.1" rx="5.2" ry="2.8" transform="rotate(-30 624.1 384.1)"/><ellipse cx="722.6" cy="423.7" rx="5.2" ry="2.8" transform="rotate(95 722.6 423.7)"/><ellipse cx="715.4" cy="461.0" rx="5.2" ry="2.8" transform="rotate(-170 715.4 461.0)"/><ellipse cx="574.9" cy="441.7" rx="5.2" ry="2.8" transform="rotate(70 574.9 441.7)"/><ellipse cx="584.5" cy="453.7" rx="5.2" ry="2.8" transform="rotate(85 584.5 453.7)"/><ellipse cx="582.1" cy="473.0" rx="5.2" ry="2.8" transform="rotate(-150 582.1 473.0)"/><ellipse cx="700.5" cy="482.6" rx="5.2" ry="2.8" transform="rotate(90 700.5 482.6)"/><ellipse cx="682.9" cy="509.0" rx="5.2" ry="2.8" transform="rotate(-25 682.9 509.0)"/><ellipse cx="519.6" cy="529.4" rx="5.2" ry="2.8" transform="rotate(45 519.6 529.4)"/><ellipse cx="697.4" cy="547.4" rx="5.2" ry="2.8" transform="rotate(175 697.4 547.4)"/><ellipse cx="710.6" cy="554.6" rx="5.2" ry="2.8" transform="rotate(30 710.6 554.6)"/><ellipse cx="619.3" cy="561.8" rx="5.2" ry="2.8" transform="rotate(160 619.3 561.8)"/><ellipse cx="667.3" cy="566.6" rx="5.2" ry="2.8" transform="rotate(140 667.3 566.6)"/><ellipse cx="574.9" cy="572.7" rx="5.2" ry="2.8" transform="rotate(-60 574.9 572.7)"/><ellipse cx="788.4" cy="320.4" rx="5.2" ry="2.8" transform="rotate(135 788.4 320.4)"/><ellipse cx="842.5" cy="334.8" rx="5.2" ry="2.8" transform="rotate(130 842.5 334.8)"/><ellipse cx="783.6" cy="350.9" rx="5.2" ry="2.8" transform="rotate(20 783.6 350.9)"/><ellipse cx="908.5" cy="296.4" rx="5.2" ry="2.8" transform="rotate(90 908.5 296.4)"/><ellipse cx="912.8" cy="329.3" rx="5.2" ry="2.8" transform="rotate(65 912.8 329.3)"/><ellipse cx="871.3" cy="358.9" rx="5.2" ry="2.8" transform="rotate(60 871.3 358.9)"/><ellipse cx="933.7" cy="350.0" rx="5.2" ry="2.8" transform="rotate(40 933.7 350.0)"/><ellipse cx="985.4" cy="358.1" rx="5.2" ry="2.8" transform="rotate(-170 985.4 358.1)"/><ellipse cx="971.0" cy="361.3" rx="5.2" ry="2.8" transform="rotate(155 971.0 361.3)"/><ellipse cx="1009.4" cy="308.4" rx="5.2" ry="2.8" transform="rotate(70 1009.4 308.4)"/><ellipse cx="977.0" cy="392.5" rx="5.2" ry="2.8" transform="rotate(120 977.0 392.5)"/><ellipse cx="884.0" cy="410.5" rx="5.2" ry="2.8" transform="rotate(90 884.0 410.5)"/><ellipse cx="886.9" cy="428.5" rx="5.2" ry="2.8" transform="rotate(5 886.9 428.5)"/><ellipse cx="840.1" cy="435.0" rx="5.2" ry="2.8" transform="rotate(15 840.1 435.0)"/><ellipse cx="813.6" cy="473.0" rx="5.2" ry="2.8" transform="rotate(-40 813.6 473.0)"/><ellipse cx="986.6" cy="417.7" rx="5.2" ry="2.8" transform="rotate(30 986.6 417.7)"/><ellipse cx="959.0" cy="456.1" rx="5.2" ry="2.8" transform="rotate(-15 959.0 456.1)"/><ellipse cx="1013.0" cy="459.0" rx="5.2" ry="2.8" transform="rotate(0 1013.0 459.0)"/><ellipse cx="928.9" cy="465.8" rx="5.2" ry="2.8" transform="rotate(35 928.9 465.8)"/><ellipse cx="1019.0" cy="470.6" rx="5.2" ry="2.8" transform="rotate(-80 1019.0 470.6)"/><ellipse cx="1028.1" cy="492.2" rx="5.2" ry="2.8" transform="rotate(-95 1028.1 492.2)"/><ellipse cx="1017.8" cy="551.0" rx="5.2" ry="2.8" transform="rotate(-45 1017.8 551.0)"/><ellipse cx="813.6" cy="571.4" rx="5.2" ry="2.8" transform="rotate(-165 813.6 571.4)"/><ellipse cx="848.5" cy="567.8" rx="5.2" ry="2.8" transform="rotate(-60 848.5 567.8)"/><ellipse cx="864.1" cy="570.2" rx="5.2" ry="2.8" transform="rotate(0 864.1 570.2)"/><ellipse cx="978.2" cy="570.2" rx="5.2" ry="2.8" transform="rotate(-90 978.2 570.2)"/><ellipse cx="102.1" cy="586.8" rx="5.2" ry="2.8" transform="rotate(-120 102.1 586.8)"/><ellipse cx="63.7" cy="612.0" rx="5.2" ry="2.8" transform="rotate(-70 63.7 612.0)"/><ellipse cx="124.9" cy="600.0" rx="5.2" ry="2.8" transform="rotate(65 124.9 600.0)"/><ellipse cx="134.5" cy="606.0" rx="5.2" ry="2.8" transform="rotate(140 134.5 606.0)"/><ellipse cx="87.7" cy="626.4" rx="5.2" ry="2.8" transform="rotate(170 87.7 626.4)"/><ellipse cx="189.8" cy="588.0" rx="5.2" ry="2.8" transform="rotate(40 189.8 588.0)"/><ellipse cx="175.4" cy="614.4" rx="5.2" ry="2.8" transform="rotate(10 175.4 614.4)"/><ellipse cx="182.6" cy="634.9" rx="5.2" ry="2.8" transform="rotate(60 182.6 634.9)"/><ellipse cx="242.6" cy="652.9" rx="5.2" ry="2.8" transform="rotate(150 242.6 652.9)"/><ellipse cx="129.7" cy="663.7" rx="5.2" ry="2.8" transform="rotate(-150 129.7 663.7)"/><ellipse cx="99.7" cy="669.7" rx="5.2" ry="2.8" transform="rotate(90 99.7 669.7)"/><ellipse cx="84.1" cy="686.5" rx="5.2" ry="2.8" transform="rotate(-60 84.1 686.5)"/><ellipse cx="112.9" cy="692.5" rx="5.2" ry="2.8" transform="rotate(180 112.9 692.5)"/><ellipse cx="3.6" cy="693.7" rx="5.2" ry="2.8" transform="rotate(10 3.6 693.7)"/><ellipse cx="146.5" cy="712.9" rx="5.2" ry="2.8" transform="rotate(120 146.5 712.9)"/><ellipse cx="243.8" cy="711.7" rx="5.2" ry="2.8" transform="rotate(-20 243.8 711.7)"/><ellipse cx="48.0" cy="805.4" rx="5.2" ry="2.8" transform="rotate(-165 48.0 805.4)"/><ellipse cx="62.5" cy="839.0" rx="5.2" ry="2.8" transform="rotate(-170 62.5 839.0)"/><ellipse cx="138.1" cy="822.2" rx="5.2" ry="2.8" transform="rotate(-60 138.1 822.2)"/><ellipse cx="140.5" cy="842.6" rx="5.2" ry="2.8" transform="rotate(-35 140.5 842.6)"/><ellipse cx="225.8" cy="807.8" rx="5.2" ry="2.8" transform="rotate(30 225.8 807.8)"/><ellipse cx="236.6" cy="859.4" rx="5.2" ry="2.8" transform="rotate(-60 236.6 859.4)"/></g><g fill="#d8d8d8"><circle cx="732.8" cy="602.3" r="1.9"/><circle cx="741.1" cy="602.4" r="2.1"/><circle cx="740.4" cy="607.3" r="1.5"/><circle cx="731.0" cy="600.5" r="2.2"/><circle cx="732.7" cy="608.5" r="1.3"/><circle cx="805.2" cy="800.6" r="1.3"/><circle cx="987.4" cy="817.4" r="1.5"/><circle cx="989.1" cy="826.0" r="2.1"/><circle cx="984.0" cy="822.0" r="1.4"/><circle cx="981.0" cy="821.0" r="2.0"/><circle cx="989.6" cy="823.6" r="2.1"/><circle cx="924.3" cy="851.2" r="1.8"/><circle cx="927.7" cy="850.0" r="2.0"/><circle cx="933.5" cy="851.7" r="1.1"/><circle cx="922.1" cy="856.7" r="1.0"/><circle cx="930.2" cy="853.1" r="1.4"/><circle cx="938.5" cy="640.9" r="1.3"/><circle cx="505.4" cy="252.2" r="1.3"/><circle cx="666.1" cy="229.4" r="1.3"/><circle cx="684.1" cy="251.0" r="1.3"/><circle cx="825.6" cy="158.5" r="1.3"/><circle cx="1021.4" cy="247.4" r="1.3"/><circle cx="134.5" cy="368.5" r="2.6"/><circle cx="117.7" cy="530.6" r="1.3"/><circle cx="370.4" cy="393.2" r="1.3"/><circle cx="489.8" cy="530.6" r="1.3"/><circle cx="718.4" cy="353.8" r="1.5"/><circle cx="715.3" cy="346.9" r="1.6"/><circle cx="713.2" cy="355.7" r="2.0"/><circle cx="721.4" cy="355.3" r="1.8"/><circle cx="717.8" cy="352.1" r="1.6"/><circle cx="612.1" cy="310.8" r="1.3"/><circle cx="619.3" cy="459.8" r="1.3"/><circle cx="85.0" cy="606.1" r="1.5"/><circle cx="89.8" cy="606.9" r="1.3"/><circle cx="90.4" cy="606.5" r="1.9"/><circle cx="89.7" cy="607.0" r="2.0"/><circle cx="91.3" cy="596.6" r="1.7"/><circle cx="199.6" cy="626.2" r="1.6"/><circle cx="206.5" cy="628.3" r="1.9"/><circle cx="197.4" cy="618.2" r="2.1"/><circle cx="204.0" cy="624.3" r="1.4"/><circle cx="197.8" cy="625.1" r="1.7"/><circle cx="181.0" cy="841.6" r="1.5"/><circle cx="174.9" cy="848.8" r="1.4"/><circle cx="179.6" cy="850.9" r="1.4"/><circle cx="178.3" cy="848.0" r="2.1"/><circle cx="176.9" cy="843.5" r="1.1"/><circle cx="194.3" cy="829.2" r="1.1"/><circle cx="190.5" cy="834.0" r="1.8"/><circle cx="187.4" cy="837.5" r="1.1"/><circle cx="186.3" cy="836.2" r="1.1"/><circle cx="187.4" cy="836.9" r="1.8"/><circle cx="151.1" cy="845.6" r="1.4"/><circle cx="156.4" cy="848.2" r="1.1"/><circle cx="156.2" cy="850.7" r="2.1"/><circle cx="159.0" cy="854.8" r="1.5"/><circle cx="157.4" cy="847.5" r="1.4"/><circle cx="43.2" cy="652.9" r="1.3"/><circle cx="88.9" cy="774.2" r="1.3"/></g></svg>
</div>
<!-- analysis bottom panel -->
<div class="a" style="left:209px;top:1007px;width:1221px;height:122px;background:#fff;border:1px solid #a0a0a0"></div>
<div class="a" style="left:210px;top:1008px;width:1219px;height:23px;background:#dcdcdc"></div>
<!-- right panel -->
<div class="a" style="left:1433px;top:62px;width:486px;height:1068px;background:#f0f0f0;border-left:1px solid #a0a0a0"></div>
<!-- status bar -->
<div class="a" style="left:0;top:1130px;width:1919px;height:22px;background:#f0f0f0;border-top:1px solid #d8d8d8"></div>
<!-- taskbar -->
<div class="a" style="left:0;top:1152px;width:1919px;height:47px;background:linear-gradient(90deg,#d9dae6 0,#dcdbe8 40%,#e0dde9 75%,#dddde9 100%);border-top:1px solid #c4c4cc"></div>

<!-- TITLE CONTENT -->
<svg class="a" style="left:3px;top:4px" width="15" height="15" viewBox="0 0 15 15"><rect x="0.5" y="0.5" width="14" height="14" fill="#fff" stroke="#c8c8c8"/><rect x="1" y="5" width="5" height="6" fill="#d83b2a"/><rect x="7" y="1" width="7" height="7" fill="#f2c230"/><rect x="7" y="9" width="6" height="4" fill="#4a90d9"/><rect x="1" y="12" width="5" height="2" fill="#cfcfcf"/></svg>
<div class="t" style="left:23px;top:6px;font-size:11.6px;color:#000">HTCasa II - 2.0.0-preview.0.99</div>
<div class="a" style="left:1799px;top:10px;width:11px;height:1px;background:#222"></div>
<svg class="a" style="left:1843px;top:4px" width="13" height="13" viewBox="0 0 13 13"><rect x="1.5" y="3.5" width="8" height="8" rx="1.5" fill="none" stroke="#222" stroke-width="1.1"/><path d="M3.5 1.5h6a2 2 0 0 1 2 2v6" fill="none" stroke="#222" stroke-width="1.1"/></svg>
<svg class="a" style="left:1889px;top:4px" width="12" height="12" viewBox="0 0 12 12"><path d="M1 1L11 11M11 1L1 11" stroke="#222" stroke-width="1.1"/></svg>
<!-- RIBBON CONTENT -->
<svg class="a" style="left:2px;top:26px" width="32" height="32" viewBox="0 0 32 32"><defs><radialGradient id="bg1" cx="0.7" cy="0.3" r="0.9"><stop offset="0" stop-color="#8a8a8a"/><stop offset="0.5" stop-color="#5a5a5a"/><stop offset="1" stop-color="#3c3c3c"/></radialGradient></defs><rect width="32" height="32" fill="url(#bg1)"/><path d="M7 26C6 20 7 13 12 9C16 6 22 6 26 10C29 14 30 20 29 25" fill="none" stroke="#3ae02a" stroke-width="1.6" stroke-dasharray="1.5 1"/><ellipse cx="22" cy="9" rx="3" ry="2.2" fill="#f4f4f4"/></svg>
<div class="t b" style="left:37px;top:36px;font-size:13.2px;color:#000">Boar</div>
<svg class="a" style="left:82px;top:39px" width="8" height="5"><path d="M0 0h8L4 4z" fill="#222"/></svg>
<svg class="a" style="left:100px;top:25px" width="34" height="34" viewBox="0 0 34 34"><path d="M2 20L18 2L32 10L16 30Z" fill="#1e1e1e"/><path d="M16 30L32 10L32 13L17 33Z" fill="#d9cfa8"/><path d="M2 20L16 30L17 33L3 23Z" fill="#101010"/><path d="M26 18L30 14L27 26Z" fill="#999"/></svg>
<div class="t b" style="left:136px;top:36px;font-size:13.6px;color:#000">Reports</div>
<svg class="a" style="left:197px;top:26px" width="31" height="31" viewBox="0 0 31 31"><rect x="1" y="5" width="24" height="25" rx="1.5" fill="#e8e8e8" stroke="#8a8a8a" stroke-width="0.8"/><rect x="2" y="4" width="22" height="22" fill="#fcfcfc" stroke="#b0b0b0" stroke-width="0.6"/><rect x="3" y="1.5" width="19" height="4" fill="#d8b440" stroke="#9a7a20" stroke-width="0.5"/><path d="M4.5 1V5M7 1V5M9.5 1V5M12 1V5M14.5 1V5M17 1V5M19.5 1V5" stroke="#6a5a20" stroke-width="0.6"/><path d="M5 10h15M5 13h10M5 16h8" stroke="#b8b8b8" stroke-width="0.8"/><path d="M10 20L25 11L27.5 14L12 22.5Z" fill="#e8b040" stroke="#9a6a10" stroke-width="0.5"/><path d="M25 11L27.5 14L29.5 12.5L27 9.5Z" fill="#e03838"/><path d="M10 20L12 22.5L8.5 22.5Z" fill="#4a4a4a"/></svg>
<div class="t b" style="left:231px;top:36px;font-size:12.8px;color:#000">Ascii</div>
<svg class="a" style="left:1745px;top:28px" width="30" height="30" viewBox="0 0 30 30"><defs><linearGradient id="wr" x1="0" y1="0" x2="1" y2="1"><stop offset="0" stop-color="#f4f4f4"/><stop offset="1" stop-color="#b8b8b8"/></linearGradient><linearGradient id="sd" x1="0" y1="0" x2="1" y2="1"><stop offset="0" stop-color="#6a9ad8"/><stop offset="1" stop-color="#2a5aa0"/></linearGradient></defs><ellipse cx="15" cy="29" rx="13" ry="1.5" fill="#000" opacity="0.08"/><path d="M4 3.5C2 5.5 2 8.5 4 10.5C5.5 12 7.5 12.5 9.5 12L22.5 25C23.5 26 25 26 26 25L26.5 24.5C27.5 23.5 27.5 22 26.5 21L13.5 8C14 6 13.5 4 12 2.5C10 0.5 7 0.5 5 2L8.5 5.5L7.5 7.5L5.5 8L3 5" fill="url(#wr)" stroke="#8a8a8a" stroke-width="0.9"/><path d="M24 1.5L28 5.5L19 15L15.5 11.5Z" fill="#b8cde8" stroke="#6a8ab8" stroke-width="0.8"/><path d="M16.5 12.5L18 14L7 26C5.5 27.5 3 27.5 2 26.5C1 25.5 1 23 2.5 21.5Z" fill="url(#sd)" stroke="#24508f" stroke-width="0.8"/></svg>
<div class="t b" style="left:1778px;top:36px;font-size:13.7px;color:#000">Settings</div>
<svg class="a" style="left:1840px;top:26px" width="32" height="31" viewBox="0 0 32 31"><defs><radialGradient id="hg" cx="0.35" cy="0.3" r="0.8"><stop offset="0" stop-color="#2f5fa8"/><stop offset="0.7" stop-color="#5b8ccc"/><stop offset="1" stop-color="#9ab8e0"/></radialGradient></defs><ellipse cx="16" cy="29.5" rx="12" ry="1.5" fill="#000" opacity="0.1"/><circle cx="16" cy="15" r="14.2" fill="#fff" stroke="#2b5aa0" stroke-width="1.3"/><circle cx="16" cy="15" r="12" fill="url(#hg)"/><path d="M11.5 11.5C11.5 8 13.5 6.5 16 6.5S20.5 8 20.5 11C20.5 14 17 14.5 17 17.5" fill="none" stroke="#f2f2f2" stroke-width="3.2"/><rect x="15" y="19.5" width="3.5" height="3.5" fill="#f2f2f2"/></svg>
<div class="t b" style="left:1875px;top:36px;font-size:13.2px;color:#000">Help</div>
<svg class="a" style="left:1908px;top:40px" width="8" height="5"><path d="M0 0h8L4 4z" fill="#222"/></svg>
<!-- LEFT CONTENT -->
<svg class="a" style="left:88px;top:72px" width="30" height="30" viewBox="0 0 30 30"><path d="M1 8V1H8M22 1H29V8M29 22V29H22M8 29H1V22" fill="none" stroke="#8c8c8c" stroke-width="2"/><circle cx="15" cy="15" r="6" fill="#a8a8a8"/></svg>
<div class="t" style="left:0;width:203px;text-align:center;top:105.4px;font-size:14px;color:#6e6e6e">Auto Focus</div>
<svg class="a" style="left:92px;top:148px" width="22" height="22" viewBox="0 0 22 22"><circle cx="11" cy="11" r="9.5" fill="#c4c4c4" stroke="#b0b0b0"/><circle cx="10" cy="9" r="6" fill="#d2d2d2"/></svg>
<div class="t" style="left:0;width:203px;text-align:center;top:177.8px;font-size:14px;color:#6e6e6e">Capture</div>
<svg class="a" style="left:89px;top:217px" width="28" height="29" viewBox="0 0 28 29"><path d="M3 14C3 7 8 3 14 3C18 3 21 5 23 8L26 5V14H17L20 11C18 8 16 7 14 7C10 7 7 10 7 14Z" fill="#b8b8b8"/><path d="M25 15C25 22 20 26 14 26C10 26 7 24 5 21L2 24V15H11L8 18C10 21 12 22 14 22C18 22 21 19 21 15Z" fill="#a6a6a6"/><ellipse cx="14" cy="27" rx="10" ry="1.5" fill="#d8d8d8"/></svg>
<div class="t" style="left:0;width:203px;text-align:center;top:250.8px;font-size:14px;color:#6e6e6e">Auto Capture</div>
<div class="a" style="left:9px;top:297px;width:177px;height:24px;background:#fff;border:1px solid #cfcfcf"></div>
<div class="t" style="left:13px;top:302.2px;font-size:13.1px">Center Area</div>
<svg class="a" style="left:171px;top:305px" width="10" height="7"><path d="M1 1L5 5L9 1" fill="none" stroke="#444" stroke-width="1"/></svg>
<div class="t" style="left:14px;top:334.8px;font-size:13.2px">Rows</div>
<div class="a" style="left:79px;top:329px;width:105px;height:23px;background:#fff;border:1px solid #9a9a9a"></div>
<div class="t" style="left:81px;top:332.0px;font-size:13px">3</div>
<div class="a" style="left:167px;top:331px;width:15px;height:19px;background:#f3f3f3;border:1px solid #d0d0d0"></div>
<svg class="a" style="left:170px;top:332px" width="9" height="17"><path d="M1.5 5L4.5 1.5L7.5 5Z M1.5 11L4.5 14.5L7.5 11Z" fill="#111"/></svg>
<div class="t" style="left:14px;top:361.2px;font-size:13.6px">Columns</div>
<div class="a" style="left:79px;top:356px;width:105px;height:23px;background:#fff;border:1px solid #9a9a9a"></div>
<div class="t" style="left:81px;top:359.0px;font-size:13px">3</div>
<div class="a" style="left:167px;top:358px;width:15px;height:19px;background:#f3f3f3;border:1px solid #d0d0d0"></div>
<svg class="a" style="left:170px;top:359px" width="9" height="17"><path d="M1.5 5L4.5 1.5L7.5 5Z M1.5 11L4.5 14.5L7.5 11Z" fill="#111"/></svg>
<svg class="a" style="left:87px;top:397px" width="32" height="32" viewBox="0 0 32 32"><path d="M10 1H22L31 10V22L22 31H10L1 22V10Z" fill="#d42020" stroke="#9a1010"/><path d="M10 3H22L29 10V15H3V10Z" fill="#e85050" opacity="0.6"/><path d="M10 10L22 22M22 10L10 22" stroke="#fff" stroke-width="3.5"/></svg>
<div class="t" style="left:0;width:203px;text-align:center;top:431.4px;font-size:14.1px;color:#000">Cancel Auto Capture</div>
<svg class="a" style="left:92px;top:471px" width="22" height="31" viewBox="0 0 22 31"><path d="M11 1C5 1 1 5 1 10C1 14 4 16 6 19V23H16V19C18 16 21 14 21 10C21 5 17 1 11 1Z" fill="#d4d4d4" stroke="#bdbdbd"/><rect x="6" y="23" width="10" height="5" fill="#b4b4b4"/><rect x="8" y="28" width="6" height="2" fill="#9c9c9c"/></svg>
<div class="t" style="left:0;width:203px;text-align:center;top:504.8px;font-size:14px;color:#6e6e6e">Live Overlay</div>
<svg class="a" style="left:88px;top:544px" width="30" height="30" viewBox="0 0 30 30"><path d="M1 3H10L12 6H28V29H1Z" fill="#aaa"/><path d="M9 1H22L26 5V18H9Z" fill="#f4f4f4" stroke="#bbb"/><path d="M12 6h10M12 9h10M12 12h8" stroke="#c0c0c0"/><path d="M1 13H28L26 29H1Z" fill="#bcbcbc"/></svg>
<div class="t" style="left:0;width:203px;text-align:center;top:578.1px;font-size:14px;color:#6e6e6e">Open Video</div>
<svg class="a" style="left:88px;top:619px" width="30" height="27" viewBox="0 0 30 27"><path d="M1 1H11L13 4H27V26H1Z" fill="#a8a8a8"/><path d="M3 3h8M3 5h8" stroke="#c8c8c8"/><path d="M4 10H29L27 26H1Z" fill="#bdbdbd"/></svg>
<div class="t" style="left:0;width:203px;text-align:center;top:650.8px;font-size:14px;color:#6e6e6e">Open Analysis</div>
<svg class="a" style="left:88px;top:692px" width="30" height="28" viewBox="0 0 30 28"><rect x="6" y="1" width="18" height="14" fill="#eee" stroke="#c0c0c0"/><path d="M15 4L11 9H19Z M13 9h4v3h-4z" fill="#c0c0c0"/><rect x="1" y="13" width="28" height="13" rx="2" fill="#c4c4c4" stroke="#aaa"/><path d="M4 17H26" stroke="#e2e2e2"/></svg>
<div class="t" style="left:0;width:203px;text-align:center;top:724.1px;font-size:14px;color:#6e6e6e">Save and Report</div>
<svg class="a" style="left:88px;top:763px" width="30" height="31" viewBox="0 0 30 31"><path d="M5 14L1 22V30H29V22L25 14Z" fill="#b4b4b4" stroke="#9c9c9c"/><path d="M1 22H29" stroke="#d0d0d0"/><path d="M6 26h18" stroke="#8f8f8f" stroke-dasharray="1 1"/><path d="M8 8C12 2 20 3 21 10L24 10L18 18L11 10L15 10C15 7 12 6 8 8Z" fill="#c8c8c8" stroke="#a8a8a8"/></svg>
<div class="t" style="left:0;width:203px;text-align:center;top:796.8px;font-size:14px;color:#6e6e6e">Save and Clear</div>
<svg class="a" style="left:88px;top:1066px" width="30" height="31" viewBox="0 0 30 31"><rect x="5" y="1" width="20" height="6" fill="#f0f0f0" stroke="#b8b8b8"/><path d="M1 6H29V11H1Z" fill="#b8b8b8"/><path d="M3 11H27L25 30H5Z" fill="#d6d6d6"/><path d="M8 14V26M13 14V26M18 14V26M23 14V26" stroke="#e6e6e6"/></svg>
<div class="t" style="left:0;width:203px;text-align:center;top:1100.1px;font-size:14px;color:#6e6e6e">Clear Data</div>
<!--LEFTEND-->
<!-- CENTER TOOLBARS -->
<div class="a" style="left:213px;top:70px;width:1px;height:27px;background:#8a8a8a"></div>
<div class="a" style="left:222px;top:72px;width:179px;height:23px;background:#fff"></div>
<div class="t" style="left:226.0px;top:78.1px;font-size:11.6px;color:#000;letter-spacing:-0.2px">Boar IVOSII IMV 2024 HT 1.16.</div>
<div class="a" style="left:390px;top:73px;width:11px;height:21px;background:linear-gradient(#6f7f96,#a9b9d2)"></div>
<svg class="a" style="left:392px;top:81px" width="7" height="4"><path d="M0 0h7L3.5 4z" fill="#111"/></svg>
<svg class="a" style="left:424px;top:69px" width="14" height="14" viewBox="0 0 14 14"><path d="M7 0.5L8.2 2.3L10.3 1.6L10.6 3.7L12.7 4L12 6.1L13.5 7L12 8.2L12.7 10.3L10.6 10.6L10.3 12.7L8.2 12L7 13.5L5.8 12L3.7 12.7L3.4 10.6L1.3 10.3L2 8.2L0.5 7L2 5.8L1.3 3.7L3.4 3.4L3.7 1.3L5.8 2Z" fill="#d0d0d0" stroke="#8c8c8c" stroke-width="0.8"/><circle cx="7" cy="7" r="2.5" fill="#f4f4f4" stroke="#8c8c8c" stroke-width="0.8"/></svg>
<div class="t" style="left:413.0px;top:85.6px;font-size:11.4px;color:#000">Setups</div>
<svg class="a" style="left:500px;top:68px" width="16" height="15" viewBox="0 0 16 15"><rect x="0.5" y="0.5" width="15" height="14" fill="#e8e8e8" stroke="#999"/><rect x="2" y="2" width="12" height="11" fill="#1f5d98"/><path d="M3 8H6L7 5L8.5 10L9.5 7H13" fill="none" stroke="#e8e8b0" stroke-width="1"/></svg>
<div class="t" style="left:459.4px;top:86.0px;font-size:12.1px;color:#000">Live Configuration</div>
<div class="a" style="left:566px;top:70px;width:1px;height:28px;background:#8a8a8a"></div>
<div class="t b" style="left:1072.4px;top:78.5px;font-size:11.8px;color:#108010">66 - Acceptable</div>
<div class="a" style="left:1172px;top:70px;width:1px;height:28px;background:#8a8a8a"></div>
<div class="t" style="left:1182.0px;top:78.4px;font-size:11.9px;color:#000">Intensity</div>
<div class="a" style="left:1233px;top:72px;width:75px;height:23px;background:#fff;border:1px solid #a8a8a8"></div>
<div class="t" style="left:1236.0px;top:76.2px;font-size:12.2px;color:#000">187</div>
<div class="a" style="left:1291px;top:74px;width:15px;height:19px;background:#f6f6f6;border:1px solid #d4d4d4"></div>
<svg class="a" style="left:1294px;top:76px" width="9" height="15"><path d="M1.5 4.5L4.5 1.5L7.5 4.5Z M1.5 10.5L4.5 13.5L7.5 10.5Z" fill="#111"/></svg>
<div class="t" style="left:1315.2px;top:78.3px;font-size:12.1px;color:#000">Auto Illum One Shot</div>
<div class="a" style="left:214px;top:113px;width:1px;height:14px;background:#8a8a8a"></div>
<svg class="a" style="left:222.0px;top:116.5px" width="11.5" height="7.0"><defs><linearGradient id="gu222" x1="0" y1="0" x2="0" y2="1"><stop offset="0" stop-color="#7fb0f0"/><stop offset="1" stop-color="#2d6fd6"/></linearGradient></defs><path d="M0 7.0 L5.75 0 L11.5 7.0 Z" fill="url(#gu222)"/></svg>
<svg class="a" style="left:245.5px;top:116.5px" width="11.5" height="7.0"><defs><linearGradient id="gd245" x1="0" y1="0" x2="0" y2="1"><stop offset="0" stop-color="#7fb0f0"/><stop offset="1" stop-color="#2d6fd6"/></linearGradient></defs><path d="M0 0 L11.5 0 L5.75 7.0 Z" fill="url(#gd245)"/></svg>
<svg class="a" style="left:270.5px;top:114.3px" width="6.5" height="11.0"><defs><linearGradient id="gl270" x1="0" y1="0" x2="0" y2="1"><stop offset="0" stop-color="#7fb0f0"/><stop offset="1" stop-color="#2d6fd6"/></linearGradient></defs><path d="M6.5 0 L0 5.5 L6.5 11.0 Z" fill="url(#gl270)"/></svg>
<svg class="a" style="left:294.0px;top:114.3px" width="6.5" height="11.0"><defs><linearGradient id="gr294" x1="0" y1="0" x2="0" y2="1"><stop offset="0" stop-color="#7fb0f0"/><stop offset="1" stop-color="#2d6fd6"/></linearGradient></defs><path d="M0 0 L6.5 5.5 L0 11.0 Z" fill="url(#gr294)"/></svg>
<div class="t" style="left:314.6px;top:114.3px;font-size:11.2px;color:#8a8a8a">Load</div>
<div class="t" style="left:351.7px;top:113.8px;font-size:11.8px;color:#000">Unload</div>
<div class="a" style="left:398px;top:113px;width:1px;height:14px;background:#8a8a8a"></div>
<div class="t" style="left:406.9px;top:114.0px;font-size:11.6px;color:#000">(012.35mm, 038.21mm)</div>
<div class="a" style="left:544px;top:113px;width:1px;height:14px;background:#8a8a8a"></div>
<div class="t" style="left:559.0px;top:113.8px;font-size:11.8px;color:#ff1a1a">A</div>
<div class="t" style="left:582.3px;top:113.8px;font-size:11.8px;color:#1a9a1a">B</div>
<div class="t" style="left:605.7px;top:113.8px;font-size:11.8px;color:#000">C</div>
<div class="a" style="left:621px;top:110px;width:23px;height:20px;background:linear-gradient(#a4b8d4,#8da4c4);border:1px solid #6f88aa"></div>
<div class="t" style="left:628.2px;top:113.8px;font-size:11.8px;color:#111">D</div>
<div class="a" style="left:652px;top:113px;width:1px;height:14px;background:#8a8a8a"></div>
<svg class="a" style="left:664.8px;top:117.0px" width="11.8" height="6.0"><defs><linearGradient id="gu664" x1="0" y1="0" x2="0" y2="1"><stop offset="0" stop-color="#7fb0f0"/><stop offset="1" stop-color="#2d6fd6"/></linearGradient></defs><path d="M0 6 L5.900000000000034 0 L11.800000000000068 6 Z" fill="url(#gu664)"/></svg>
<svg class="a" style="left:688.0px;top:117.0px" width="12.0" height="6.0"><defs><linearGradient id="gd688" x1="0" y1="0" x2="0" y2="1"><stop offset="0" stop-color="#7fb0f0"/><stop offset="1" stop-color="#2d6fd6"/></linearGradient></defs><path d="M0 0 L12 0 L6.0 6 Z" fill="url(#gd688)"/></svg>
<div class="a" style="left:714px;top:113px;width:1px;height:14px;background:#8a8a8a"></div>
<div class="t" style="left:727.0px;top:114.0px;font-size:11.6px;color:#000">002.5173mm</div>
<div class="a" style="left:808px;top:113px;width:1px;height:14px;background:#8a8a8a"></div>
<svg class="a" style="left:818px;top:116px" width="26" height="9"><rect x="0" y="0" width="16" height="8" fill="#10e010"/><path d="M2.5 0V8M13.5 0V8M2.5 6H13.5" stroke="#103010" stroke-width="1.2"/><path d="M18 3H24L21 6Z" fill="#111"/></svg>
<div class="a" style="left:854px;top:113px;width:1px;height:14px;background:#8a8a8a"></div>
<div class="t" style="left:866.0px;top:114.3px;font-size:11.2px;color:#000">37.2°C</div>
<div class="a" style="left:910px;top:113px;width:1px;height:14px;background:#8a8a8a"></div>
<!--CENTEREND-->
<!-- RIGHT PANEL -->
<div class="a" style="left:1433.0px;top:62.0px;width:486.0px;height:1.0px;background:#a0a0a0"></div>
<div class="a" style="left:1434.0px;top:63.0px;width:481.0px;height:27.0px;background:linear-gradient(#dedede,#d8d8d8)"></div>
<div class="a" style="left:1434.0px;top:66.0px;width:34.0px;height:20.0px;background:linear-gradient(#7f98ba,#a9bcd6);border:1px solid #7890b0"></div>
<div class="t b" style="left:1439.5px;top:71.4px;font-size:12.6px;color:#000">Info</div>
<div class="a" style="left:1472.0px;top:69.0px;width:1.0px;height:16.0px;background:#8c8c8c"></div>
<div class="a" style="left:1521.4px;top:69.0px;width:1.0px;height:16.0px;background:#8c8c8c"></div>
<div class="a" style="left:1598.9px;top:69.0px;width:1.0px;height:16.0px;background:#8c8c8c"></div>
<div class="a" style="left:1655.6px;top:69.0px;width:1.0px;height:16.0px;background:#8c8c8c"></div>
<div class="a" style="left:1707.8px;top:69.0px;width:1.0px;height:16.0px;background:#8c8c8c"></div>
<div class="t b" style="left:1479.3px;top:70.3px;font-size:11.6px;color:#000">Notes</div>
<div class="t b" style="left:1529.2px;top:70.5px;font-size:11.3px;color:#000">Data Fields</div>
<div class="t b" style="left:1606.4px;top:70.9px;font-size:10.9px;color:#000">Results</div>
<div class="t b" style="left:1663.1px;top:70.9px;font-size:10.9px;color:#000">Charts</div>
<div class="a" style="left:1914.0px;top:90.0px;width:1.0px;height:1035.0px;background:#a8a8a8"></div>
<div class="a" style="left:1436.0px;top:92.0px;width:479.0px;height:1.0px;background:#a0a0a0"></div>
<div class="a" style="left:1436.0px;top:92.0px;width:1.0px;height:327.0px;background:#a0a0a0"></div>
<div class="a" style="left:1913.0px;top:92.0px;width:1.0px;height:327.0px;background:#a0a0a0"></div>
<div class="a" style="left:1437.0px;top:93.0px;width:476.0px;height:23.0px;background:#dcdcdc"></div>
<div class="t b" style="left:1441.3px;top:100.3px;font-size:10.9px;color:#000">Analysis Info</div>
<div class="a" style="left:1896.0px;top:102.0px;width:12.0px;height:4.0px;background:#a8c4e8;border:1px solid #3a6ab0;border-radius:1px"></div>
<div class="a" style="left:1437.0px;top:116.0px;width:476.0px;height:25.0px;background:linear-gradient(#f2f2f2,#e6e6e6)"></div>
<div class="a" style="left:1437.0px;top:141.0px;width:476.0px;height:1.0px;background:#a8a8a8"></div>
<svg class="a" style="left:1442px;top:122px" width="12" height="12"><path d="M1 1L11 11M11 1L1 11" stroke="#222" stroke-width="1.6"/></svg>
<div class="t" style="left:1459.0px;top:122.9px;font-size:11.4px;color:#000">Delete</div>
<svg class="a" style="left:1500px;top:121px" width="16" height="16" viewBox="0 0 16 16"><rect x="1" y="5" width="11" height="10" fill="#eee" stroke="#9a9a9a"/><circle cx="6" cy="5" r="4" fill="#9cc4ea" stroke="#4a7ab0"/><path d="M6 13L14 5L15.5 6.5L7.5 14.5Z" fill="#e8a830" stroke="#8a5a10" stroke-width="0.6"/></svg>
<div class="t" style="left:1519.3px;top:123.0px;font-size:11.3px;color:#000">Edit</div>
<div class="a" style="left:1437.0px;top:418.0px;width:476.0px;height:1.0px;background:#a0a0a0"></div>
<div class="t" style="left:1449.0px;top:157.9px;font-size:13.5px;color:#000">Animal ID</div>
<div class="t" style="left:1449.0px;top:189.9px;font-size:14.3px;color:#000">Genetic Line</div>
<div class="t" style="left:1449.0px;top:224.0px;font-size:14.2px;color:#000">Ejaculate Number</div>
<div class="t" style="left:1449.0px;top:258.0px;font-size:14.2px;color:#000">Batch Number</div>
<div class="t" style="left:1449.0px;top:291.3px;font-size:14.2px;color:#000">Volume</div>
<div class="t" style="left:1449.0px;top:324.6px;font-size:13.9px;color:#000">Sample:Extender 1:</div>
<div class="t" style="left:1449.0px;top:357.6px;font-size:14.2px;color:#000">Collection Technician</div>
<div class="t" style="left:1449.0px;top:389.1px;font-size:14.6px;color:#000">Lab Technician</div>
<div class="a" style="left:1594.0px;top:150.5px;width:312.0px;height:23.0px;background:#fff;border:1px solid #3c7fd0"></div>
<div class="a" style="left:1596.0px;top:152.5px;width:31.0px;height:19.0px;background:#0a64c8"></div>
<div class="t" style="left:1597.0px;top:155.9px;font-size:13.3px;color:#fff">BOB</div>
<svg class="a" style="left:1891px;top:159px" width="10" height="7"><path d="M1 1L5 5L9 1" fill="none" stroke="#333" stroke-width="1"/></svg>
<div class="a" style="left:1594.5px;top:183.4px;width:311.5px;height:20.9px;background:#fff;border-bottom:1px solid #8a8a8a;box-shadow:inset 0 0 0 1px #e8e8e8"></div>
<div class="a" style="left:1594.5px;top:217.0px;width:311.5px;height:21.4px;background:#fff;border-bottom:1px solid #8a8a8a;box-shadow:inset 0 0 0 1px #e8e8e8"></div>
<div class="t" style="left:1597.0px;top:221.0px;font-size:12.8px;color:#000">125</div>
<div class="a" style="left:1594.5px;top:251.0px;width:311.5px;height:21.6px;background:#fff;border-bottom:1px solid #8a8a8a;box-shadow:inset 0 0 0 1px #e8e8e8"></div>
<div class="t" style="left:1597.0px;top:255.2px;font-size:12.8px;color:#000">20253</div>
<div class="a" style="left:1594.5px;top:287.4px;width:227.5px;height:21.0px;background:#fff;border-bottom:1px solid #8a8a8a;box-shadow:inset 0 0 0 1px #e8e8e8"></div>
<div class="t" style="left:1597.0px;top:291.7px;font-size:12.8px;color:#000">1.00</div>
<div class="a" style="left:1594.5px;top:320.6px;width:227.5px;height:20.9px;background:#fff;border-bottom:1px solid #8a8a8a;box-shadow:inset 0 0 0 1px #e8e8e8"></div>
<div class="t" style="left:1597.0px;top:324.9px;font-size:12.8px;color:#000">15.0</div>
<div class="a" style="left:1824.0px;top:288.0px;width:24.0px;height:20.0px;background:#f4f4f4;border:1px solid #d4d4d4;border-radius:3px"></div>
<div class="a" style="left:1830.0px;top:297.0px;width:12.0px;height:3.0px;background:#4a78c0"></div>
<div class="a" style="left:1852.0px;top:288.0px;width:24.0px;height:20.0px;background:#f4f4f4;border:1px solid #d4d4d4;border-radius:3px"></div>
<div class="a" style="left:1858.0px;top:297.0px;width:12.0px;height:3.0px;background:#4a78c0"></div>
<div class="a" style="left:1862.5px;top:292.5px;width:3.0px;height:12.0px;background:#4a78c0"></div>
<div class="a" style="left:1824.0px;top:321.0px;width:24.0px;height:20.0px;background:#f4f4f4;border:1px solid #d4d4d4;border-radius:3px"></div>
<div class="a" style="left:1830.0px;top:330.0px;width:12.0px;height:3.0px;background:#4a78c0"></div>
<div class="a" style="left:1852.0px;top:321.0px;width:24.0px;height:20.0px;background:#f4f4f4;border:1px solid #d4d4d4;border-radius:3px"></div>
<div class="a" style="left:1858.0px;top:330.0px;width:12.0px;height:3.0px;background:#4a78c0"></div>
<div class="a" style="left:1862.5px;top:325.5px;width:3.0px;height:12.0px;background:#4a78c0"></div>
<div class="t" style="left:1884.6px;top:292.2px;font-size:12.8px;color:#000">ml</div>
<div class="a" style="left:1594.5px;top:350.7px;width:281.0px;height:23.0px;background:#fff;border:1px solid #8a8a8a"></div>
<svg class="a" style="left:1861px;top:359px" width="10" height="7"><path d="M1 1L5 5L9 1" fill="none" stroke="#333" stroke-width="1"/></svg>
<div class="a" style="left:1594.5px;top:382.9px;width:281.0px;height:23.0px;background:#fff;border:1px solid #8a8a8a"></div>
<div class="t" style="left:1597.0px;top:386.4px;font-size:13.4px;color:#000">Agnes</div>
<div class="a" style="left:1883.0px;top:383.6px;width:22.0px;height:22.0px;background:#f6f6f6;border:1px solid #d4d4d4;border-radius:3px"></div>
<svg class="a" style="left:1886px;top:386px" width="16" height="16" viewBox="0 0 16 16"><rect x="1" y="5" width="11" height="10" fill="#eee" stroke="#9a9a9a"/><circle cx="6" cy="5" r="4" fill="#9cc4ea" stroke="#4a7ab0"/><path d="M6 13L14 5L15.5 6.5L7.5 14.5Z" fill="#e8a830" stroke="#8a5a10" stroke-width="0.6"/></svg>
<!--RIGHTEND-->
<!-- DOSING -->
<svg class="a" style="left:1861px;top:391px" width="10" height="7"><path d="M1 1L5 5L9 1" fill="none" stroke="#333" stroke-width="1"/></svg>
<div class="a" style="left:1436.0px;top:420.0px;width:479.0px;height:1.0px;background:#a0a0a0"></div>
<div class="a" style="left:1436.0px;top:420.0px;width:1.0px;height:705.0px;background:#a0a0a0"></div>
<div class="a" style="left:1437.0px;top:421.0px;width:476.0px;height:23.0px;background:#dcdcdc"></div>
<div class="t b" style="left:1442.0px;top:427.7px;font-size:11px;color:#000">Dosing</div>
<div class="t b" style="left:1444.0px;top:462.3px;font-size:15px;color:#000">Dose Input</div>
<div class="a" style="left:1441.5px;top:486.5px;width:452.0px;height:72.0px;border:1px solid #dadada"></div>
<div class="t" style="left:1451.0px;top:505.8px;font-size:14.2px;color:#000">Sperm / Dose</div>
<div class="t" style="left:1866.0px;top:505.8px;font-size:14.2px;color:#000">B</div>
<div class="t" style="left:1451.0px;top:534.7px;font-size:14.2px;color:#000">Dose Volume</div>
<div class="t" style="left:1866.0px;top:534.7px;font-size:14.2px;color:#000">ml</div>
<div class="t b" style="left:1444.0px;top:575.3px;font-size:15px;color:#000">Adjustments</div>
<div class="a" style="left:1441.5px;top:600.0px;width:452.0px;height:328.0px;border:1px solid #dadada"></div>
<div class="t" style="left:1450.0px;top:618.0px;font-size:14.2px;color:#000">Concentration</div>
<div class="t" style="left:1866.0px;top:618.0px;font-size:14.2px;color:#000">ml</div>
<svg class="a" style="left:1446px;top:646.0px" width="14" height="14"><circle cx="7" cy="7" r="6" fill="#fff" stroke="#444" stroke-width="1"/></svg>
<div class="t" style="left:1466.0px;top:646.2px;font-size:14.2px;color:#000">Total Count</div>
<svg class="a" style="left:1446px;top:674.8px" width="14" height="14"><circle cx="7" cy="7" r="6.3" fill="#0a5fc8"/><circle cx="7" cy="7" r="3" fill="#fff"/></svg>
<div class="t" style="left:1466.0px;top:675.0px;font-size:14.2px;color:#000">Motile</div>
<svg class="a" style="left:1446px;top:703.7px" width="14" height="14"><circle cx="7" cy="7" r="6" fill="#fff" stroke="#444" stroke-width="1"/></svg>
<div class="t" style="left:1466.0px;top:703.9px;font-size:14.2px;color:#000">Progressive</div>
<div class="t" style="left:1872.0px;top:676.0px;font-size:13px;color:#000">%</div>
<div class="t" style="left:1872.0px;top:705.0px;font-size:13px;color:#000">%</div>
<svg class="a" style="left:1447.0px;top:759.0px" width="13" height="13"><rect x="0" y="0" width="13" height="13" rx="2" fill="#0a5fc8"/><path d="M3.2 6.6L5.5 8.8L9.8 4.3" fill="none" stroke="#fff" stroke-width="1.2"/></svg>
<div class="t" style="left:1466.0px;top:759.4px;font-size:14.2px;color:#000">Morphology</div>
<div class="a" style="left:1869.0px;top:758.0px;width:18.0px;height:19.0px;background:#fafafa;border:1px solid #dcdcdc;border-radius:3px"></div>
<div class="a" style="left:1872.0px;top:766.0px;width:11.0px;height:3.0px;background:#5a88c8"></div>
<svg class="a" style="left:1464.0px;top:788.0px" width="13" height="13"><rect x="0" y="0" width="13" height="13" rx="2" fill="#0a5fc8"/><path d="M3.2 6.6L5.5 8.8L9.8 4.3" fill="none" stroke="#fff" stroke-width="1.2"/></svg>
<div class="t" style="left:1483.0px;top:788.0px;font-size:14.2px;color:#000">Bent Tail</div>
<svg class="a" style="left:1464.0px;top:816.8px" width="13" height="13"><rect x="0" y="0" width="13" height="13" rx="2" fill="#0a5fc8"/><path d="M3.2 6.6L5.5 8.8L9.8 4.3" fill="none" stroke="#fff" stroke-width="1.2"/></svg>
<div class="t" style="left:1483.0px;top:816.8px;font-size:14.2px;color:#000">Coiled Tail</div>
<svg class="a" style="left:1464.0px;top:846.0px" width="13" height="13"><rect x="0" y="0" width="13" height="13" rx="2" fill="#0a5fc8"/><path d="M3.2 6.6L5.5 8.8L9.8 4.3" fill="none" stroke="#fff" stroke-width="1.2"/></svg>
<div class="t" style="left:1483.0px;top:846.0px;font-size:14.2px;color:#000">DMR</div>
<svg class="a" style="left:1464.0px;top:875.5px" width="13" height="13"><rect x="0" y="0" width="13" height="13" rx="2" fill="#0a5fc8"/><path d="M3.2 6.6L5.5 8.8L9.8 4.3" fill="none" stroke="#fff" stroke-width="1.2"/></svg>
<div class="t" style="left:1483.0px;top:875.5px;font-size:14.2px;color:#000">Proximal</div>
<svg class="a" style="left:1464.0px;top:904.3px" width="13" height="13"><rect x="0" y="0" width="13" height="13" rx="2" fill="#0a5fc8"/><path d="M3.2 6.6L5.5 8.8L9.8 4.3" fill="none" stroke="#fff" stroke-width="1.2"/></svg>
<div class="t" style="left:1483.0px;top:904.3px;font-size:14.2px;color:#000">Distal</div>
<div class="t b" style="left:1447.0px;top:945.5px;font-size:15px;color:#000">Processing</div>
<svg class="a" style="left:1862px;top:943px" width="18" height="18"><circle cx="9" cy="9" r="7" fill="#8fb4dc"/></svg>
<div class="t" style="left:1883.0px;top:947.2px;font-size:13px;color:#000">l</div>
<div class="a" style="left:1441.5px;top:970.0px;width:452.0px;height:152.0px;border:1px solid #dadada;border-bottom:none"></div>
<div class="t" style="left:1452.5px;top:990.0px;font-size:14.2px;color:#000">Extender Volume</div>
<div class="a" style="left:1611.0px;top:986.0px;width:233.0px;height:21.0px;background:#efefef;border:1px solid #dcdcdc;border-bottom-color:#9c9c9c"></div>
<div class="t" style="left:1855.0px;top:991.0px;font-size:13px;color:#000">l</div>
<div class="t" style="left:1452.5px;top:1019.1px;font-size:14.1px;color:#000">Final Volume</div>
<div class="a" style="left:1611.0px;top:1015.0px;width:233.0px;height:21.0px;background:#efefef;border:1px solid #dcdcdc;border-bottom-color:#9c9c9c"></div>
<div class="t" style="left:1854.0px;top:1019.7px;font-size:13.4px;color:#000">l</div>
<div class="t" style="left:1452.5px;top:1048.1px;font-size:14.1px;color:#000">Adjusted Concentration</div>
<div class="a" style="left:1611.0px;top:1044.0px;width:233.0px;height:21.0px;background:#efefef;border:1px solid #dcdcdc;border-bottom-color:#9c9c9c"></div>
<div class="t" style="left:1854.0px;top:1048.7px;font-size:13.4px;color:#000">B/ml</div>
<div class="t" style="left:1452.5px;top:1077.1px;font-size:14.1px;color:#000">Number Of Doses</div>
<div class="a" style="left:1611.0px;top:1073.0px;width:233.0px;height:21.0px;background:#efefef;border:1px solid #dcdcdc;border-bottom-color:#9c9c9c"></div>
<div class="t" style="left:1854.0px;top:1077.7px;font-size:13.4px;color:#000">#</div>
<div class="t" style="left:1452.5px;top:1106.1px;font-size:14.1px;color:#000">Useful Sperm</div>
<div class="a" style="left:1611.0px;top:1102.0px;width:233.0px;height:19.0px;background:#efefef;border:1px solid #dcdcdc;border-bottom:none"></div>
<div class="t" style="left:1854.0px;top:1106.7px;font-size:13.4px;color:#000">%</div>
<div class="a" style="left:1905.0px;top:460.0px;width:2.0px;height:636.0px;background:#8a8a8a"></div>
<div class="a" style="left:1436.0px;top:1121.0px;width:479.0px;height:1.0px;background:#a0a0a0"></div>
<div class="a" style="left:1433.0px;top:1126.0px;width:486.0px;height:1.0px;background:#a8a8a8"></div>
<div class="a" style="left:1510.4px;top:400.2px;width:359.6px;height:23.0px;background:#dcdcdc"></div>
<div class="t b" style="left:1514.0px;top:406.3px;font-size:11.5px;color:#000">Auto Capture Progress</div>
<div class="a" style="left:1510.4px;top:423.2px;width:359.6px;height:569.0px;background:#798898"></div>
<div class="t b" style="left:1510px;width:360px;text-align:center;top:433.7px;font-size:21.8px;color:#111">Chamber D</div>
<div class="a" style="left:1516.0px;top:462.4px;width:347.0px;height:512.0px;background:#fff;border:4px solid #000"></div>
<svg class="a" style="left:1576px;top:623px" width="229" height="191" viewBox="0 0 229 191"><rect x="1" y="1" width="75" height="63" fill="#ffff00"/><rect x="76" y="1" width="151" height="63" fill="#008000"/><rect x="1" y="64" width="226" height="126" fill="#008000"/><path d="M1 1H227V190H1Z M76 1V190 M151 1V190 M1 64H227 M1 127H227" fill="none" stroke="#000" stroke-width="1.6"/></svg>
<!--DOSINGEND-->
<!-- BOTTOM CENTER -->
<svg width="0" height="0" style="position:absolute"><defs><pattern id="thn" width="64" height="48" patternUnits="userSpaceOnUse"><rect width="64" height="48" fill="#3c3c3c"/><g fill="#8a8a8a"><circle cx="15.2" cy="26.1" r="0.5"/><circle cx="23.7" cy="29.0" r="0.5"/><circle cx="40.0" cy="3.1" r="0.5"/><circle cx="0.8" cy="40.2" r="0.5"/><circle cx="16.6" cy="11.2" r="0.5"/><circle cx="63.7" cy="22.6" r="0.5"/><circle cx="53.5" cy="22.9" r="0.5"/><circle cx="40.9" cy="7.2" r="0.5"/><circle cx="40.6" cy="41.7" r="0.5"/><circle cx="33.5" cy="35.6" r="0.5"/><circle cx="43.0" cy="3.1" r="0.5"/><circle cx="48.5" cy="28.4" r="0.5"/><circle cx="19.3" cy="1.5" r="0.5"/><circle cx="55.4" cy="22.7" r="0.5"/><circle cx="46.0" cy="42.2" r="0.5"/><circle cx="45.7" cy="44.2" r="0.5"/><circle cx="25.3" cy="38.4" r="0.5"/><circle cx="28.5" cy="44.9" r="0.5"/><circle cx="56.2" cy="4.7" r="0.5"/><circle cx="8.7" cy="10.4" r="0.5"/><circle cx="61.8" cy="20.9" r="0.5"/><circle cx="40.1" cy="14.4" r="0.5"/><circle cx="32.5" cy="18.5" r="0.5"/><circle cx="22.5" cy="28.1" r="0.5"/><circle cx="37.4" cy="43.4" r="0.5"/><circle cx="43.6" cy="44.6" r="0.5"/><circle cx="54.8" cy="47.6" r="0.5"/><circle cx="43.0" cy="7.8" r="0.5"/><circle cx="55.1" cy="46.3" r="0.5"/><circle cx="57.9" cy="27.3" r="0.5"/><circle cx="45.7" cy="10.1" r="0.5"/><circle cx="53.2" cy="27.5" r="0.5"/><circle cx="18.2" cy="3.0" r="0.5"/><circle cx="54.7" cy="47.5" r="0.5"/><circle cx="5.7" cy="38.4" r="0.5"/><circle cx="26.3" cy="7.2" r="0.5"/><circle cx="18.8" cy="36.9" r="0.5"/><circle cx="55.9" cy="2.1" r="0.5"/><circle cx="39.3" cy="2.2" r="0.5"/><circle cx="46.0" cy="15.9" r="0.5"/></g></pattern></defs></svg>

<div class="t b" style="left:213.0px;top:1014.4px;font-size:11.1px;color:#000">Analysis Name:</div>
<div class="t" style="left:302.2px;top:1011.8px;font-size:14.2px;color:#000">BOB_20250325_073753</div>
<div class="a" style="left:467.0px;top:1013.0px;width:1.0px;height:16.0px;background:#8a8a8a"></div>
<div class="t b" style="left:473.3px;top:1014.1px;font-size:11.4px;color:#000">Video Count:</div>
<div class="t" style="left:550.5px;top:1012.3px;font-size:13.6px;color:#000">7</div>
<div class="a" style="left:567.5px;top:1013.0px;width:1.0px;height:16.0px;background:#8a8a8a"></div>
<svg class="a" style="left:574px;top:1011px" width="17" height="17" viewBox="0 0 17 17"><path d="M2 9L1 16H16L15 9Z" fill="#d8d8d8" stroke="#888"/><path d="M4 12h9" stroke="#999"/><path d="M3 6C6 1 11 2 12 6L14 6L10 10L6 6L9 6C8 4 6 4 3 6Z" fill="#3f7fc8" stroke="#2a5a9a" stroke-width="0.6"/></svg>
<div class="t" style="left:593.3px;top:1012.2px;font-size:13.7px;color:#000">Save</div>
<div class="a" style="left:1411.0px;top:1016.5px;width:12.0px;height:4.0px;background:#a8c4e8;border:1px solid #3a6ab0;border-radius:1px"></div>
<svg class="a" style="left:230.8px;top:1033px" width="64" height="48"><rect width="64" height="48" fill="url(#thn)"/></svg>
<div class="t" style="left:222.8px;width:80px;text-align:center;top:1086.6px;font-size:12.3px">07:37:54</div>
<svg class="a" style="left:337.8px;top:1033px" width="64" height="48"><rect width="64" height="48" fill="url(#thn)"/></svg>
<div class="t" style="left:329.8px;width:80px;text-align:center;top:1086.6px;font-size:12.3px">07:37:56</div>
<svg class="a" style="left:444.8px;top:1033px" width="64" height="48"><rect width="64" height="48" fill="url(#thn)"/></svg>
<div class="t" style="left:436.8px;width:80px;text-align:center;top:1086.6px;font-size:12.3px">07:37:58</div>
<svg class="a" style="left:551.8px;top:1033px" width="64" height="48"><rect width="64" height="48" fill="url(#thn)"/></svg>
<div class="t" style="left:543.8px;width:80px;text-align:center;top:1086.6px;font-size:12.3px">07:37:59</div>
<svg class="a" style="left:658.8px;top:1033px" width="64" height="48"><rect width="64" height="48" fill="url(#thn)"/></svg>
<div class="t" style="left:650.8px;width:80px;text-align:center;top:1086.6px;font-size:12.3px">07:38:01</div>
<svg class="a" style="left:765.8px;top:1033px" width="64" height="48"><rect width="64" height="48" fill="url(#thn)"/></svg>
<div class="t" style="left:757.8px;width:80px;text-align:center;top:1086.6px;font-size:12.3px">07:38:03</div>
<svg class="a" style="left:872.8px;top:1033px" width="64" height="48"><rect width="64" height="48" fill="url(#thn)"/></svg>
<div class="t" style="left:864.8px;width:80px;text-align:center;top:1086.6px;font-size:12.3px">07:38:05</div>
<div class="t" style="left:4.0px;top:1135.9px;font-size:12.4px;color:#000">Analyzing Motility</div>
<div class="t" style="left:1411.0px;top:1136.5px;font-size:11.2px;color:#000">S/N: 30005</div>
<div class="t" style="left:1504.0px;top:1136.5px;font-size:11.2px;color:#000">Zeiss 10x NH IVOS-II 160mm - X:1.44 Y:1.44</div>
<div class="t" style="left:1746.0px;top:1136.0px;font-size:11.8px;color:#000">Capillary Chamber 20µm</div>
<svg class="a" style="left:20px;top:1165px" width="24" height="22" viewBox="0 0 24 22"><rect x="0.5" y="0.5" width="23" height="21" rx="2" fill="#1a5fb4"/><rect x="2" y="2" width="9" height="18" rx="1" fill="#fff"/><rect x="13" y="2" width="9" height="9" fill="#62d0f8"/><rect x="13" y="12" width="9" height="8" fill="#2a90e0"/></svg>
<svg class="a" style="left:638px;top:1165px" width="24" height="23" viewBox="0 0 24 23"><defs><linearGradient id="wg" x1="0" y1="0" x2="1" y2="1"><stop offset="0" stop-color="#4cc2ff"/><stop offset="1" stop-color="#0a78d8"/></linearGradient></defs><rect x="0" y="0" width="11.3" height="11" fill="url(#wg)"/><rect x="12.5" y="0" width="11.3" height="11" fill="url(#wg)"/><rect x="0" y="12" width="11.3" height="11" fill="url(#wg)"/><rect x="12.5" y="12" width="11.3" height="11" fill="url(#wg)"/></svg>
<div class="a" style="left:676.0px;top:1160.5px;width:218.0px;height:30.0px;background:#fbfbfd;border:1px solid #d6d6e0;border-radius:15px"></div>
<svg class="a" style="left:688px;top:1167px" width="16" height="17"><circle cx="6.5" cy="6.5" r="5" fill="none" stroke="#222" stroke-width="1.6"/><path d="M10 10L14.5 14.5" stroke="#222" stroke-width="1.8"/></svg>
<div class="t" style="left:712.0px;top:1170.6px;font-size:12.9px;color:#555">Search</div>
<svg class="a" style="left:906px;top:1164px" width="26" height="24" viewBox="0 0 26 24"><defs><linearGradient id="tv1" x1="0" y1="0" x2="1" y2="1"><stop offset="0" stop-color="#ffffff"/><stop offset="1" stop-color="#e2e2e2"/></linearGradient><linearGradient id="tv2" x1="0" y1="0" x2="1" y2="1"><stop offset="0" stop-color="#3a3a3a"/><stop offset="1" stop-color="#111"/></linearGradient><linearGradient id="tv3" x1="0" y1="0" x2="1" y2="1"><stop offset="0" stop-color="#d8d8d8"/><stop offset="1" stop-color="#8a8a8a"/></linearGradient></defs><rect x="7" y="1" width="18" height="15" rx="1" fill="url(#tv1)"/><rect x="1" y="7" width="18" height="16" rx="1" fill="url(#tv2)"/><rect x="7" y="7" width="12" height="9" fill="url(#tv3)"/></svg>
<svg class="a" style="left:951px;top:1165px" width="24" height="22" viewBox="0 0 24 22"><defs><linearGradient id="cpa" x1="0" y1="0" x2="0.3" y2="1"><stop offset="0" stop-color="#1a8ae8"/><stop offset="0.5" stop-color="#7ac850"/><stop offset="1" stop-color="#f0b020"/></linearGradient><linearGradient id="cpb" x1="0.3" y1="0" x2="0.7" y2="1"><stop offset="0" stop-color="#2a50e0"/><stop offset="0.45" stop-color="#b850e8"/><stop offset="1" stop-color="#f87040"/></linearGradient></defs><path d="M7 2C9 1 11 1 12 3L9 13C8 15 6 16 4 16C2 16 0.5 14 1 12L3 6C4 4 5 3 7 2Z" fill="url(#cpa)"/><path d="M12 3C13 1 16 1 17 2L21 8C23 10 23 13 22 15L18 20C16 22 13 22 12 20L9 13Z" fill="url(#cpb)"/></svg>
<svg class="a" style="left:994px;top:1164px" width="26" height="22" viewBox="0 0 26 22"><path d="M1 2H10L12 4H25V21H1Z" fill="#e8a800"/><path d="M1 7H25V21H1Z" fill="#ffd34a"/><rect x="7" y="14" width="12" height="5" fill="#2a7ad0"/></svg>
<div class="a" style="left:1003.0px;top:1193.0px;width:8.0px;height:2.0px;background:#7a7a80;border-radius:1px"></div>
<svg class="a" style="left:1038px;top:1164px" width="25" height="25" viewBox="0 0 25 25"><defs><linearGradient id="eg1" x1="0" y1="1" x2="1" y2="0"><stop offset="0" stop-color="#0a5ab8"/><stop offset="0.6" stop-color="#1aa0e0"/><stop offset="1" stop-color="#50d860"/></linearGradient><linearGradient id="eg2" x1="0" y1="0" x2="1" y2="1"><stop offset="0" stop-color="#2a88d8"/><stop offset="1" stop-color="#0a4aa8"/></linearGradient></defs><path d="M12.5 0.5C19 0.5 24 5 24 11C24 14 22 16 19 16C16 16 14 14.5 14 12.5C14 10 16.5 9.5 16.5 8C16.5 6 14 4.5 11 4.5C6 4.5 1 8.5 1 13C1 6 6 0.5 12.5 0.5Z" fill="url(#eg1)"/><path d="M1 13C1 8.5 5 5 9.5 5C6.5 6.5 5 9 5 12C5 17 9.5 21 15 21C18 21 20 20 21 19C19 22.5 15.5 24.5 12 24.5C5.5 24.5 1 19 1 13Z" fill="url(#eg2)"/></svg>
<svg class="a" style="left:1083px;top:1163px" width="24" height="24" viewBox="0 0 24 24"><path d="M7 6V4C7 2 9 1 12 1S17 2 17 4V6" fill="none" stroke="#1a4a80" stroke-width="1.5"/><rect x="1" y="6" width="22" height="17" rx="2" fill="#1a5a9a"/><rect x="8" y="10" width="4" height="4" fill="#f25022"/><rect x="12.5" y="10" width="4" height="4" fill="#7fba00"/><rect x="8" y="14.5" width="4" height="4" fill="#00a4ef"/><rect x="12.5" y="14.5" width="4" height="4" fill="#ffb900"/></svg>
<div class="a" style="left:1122.0px;top:1157.0px;width:38.0px;height:38.0px;background:rgba(255,255,255,0.35);border-radius:4px"></div>
<svg class="a" style="left:1128px;top:1163px" width="26" height="26" viewBox="0 0 26 26"><path d="M2 2H10M2 2V10M2 13V16" stroke="#e03a2a" stroke-width="2.2" stroke-dasharray="3 1.5" fill="none"/><path d="M8 8L14 16M20 8L14 16V22" stroke="#3a8ad8" stroke-width="2" fill="none"/><circle cx="20" cy="20" r="2.5" fill="none" stroke="#3a8ad8" stroke-width="1.6"/><circle cx="12" cy="22" r="2.5" fill="none" stroke="#3a8ad8" stroke-width="1.6"/></svg>
<div class="a" style="left:1130.0px;top:1193.0px;width:16.0px;height:2.0px;background:#7a7a80;border-radius:1px"></div>
<svg class="a" style="left:1170px;top:1163px" width="24" height="26" viewBox="0 0 24 26"><path d="M17 1L23 4V22L17 25L6 15L2 18L0 17V9L2 8L6 11Z" fill="#8a5ad0"/><path d="M17 7V19L10 13Z" fill="#c8a8f0"/><path d="M2 10V16L5 13Z" fill="#c8a8f0"/></svg>
<div class="a" style="left:1208.0px;top:1157.0px;width:38.0px;height:38.0px;background:rgba(255,255,255,0.45);border-radius:4px"></div>
<svg class="a" style="left:1215px;top:1164px" width="24" height="23" viewBox="0 0 24 23"><rect x="0.5" y="0.5" width="23" height="22" rx="2" fill="#2a50b8" stroke="#1a3a90"/><path d="M5 18C8 12 10 8 14 4M9 18C12 13 16 9 19 6M7 10L17 14" stroke="#cfe0ff" stroke-width="1.2" fill="none"/></svg>
<div class="a" style="left:1219.0px;top:1193.0px;width:16.0px;height:3.0px;background:#1a6ad8;border-radius:1.5px"></div>
<svg class="a" style="left:1259px;top:1163px" width="25" height="24" viewBox="0 0 25 24"><rect x="0.5" y="0.5" width="24" height="23" rx="3" fill="#1a8ad8"/><path d="M0.5 18L8 10L14 16L18 12L24.5 18V20C24.5 22 23 23.5 21 23.5H4C2 23.5 0.5 22 0.5 20Z" fill="#a8dcff"/><circle cx="18" cy="6" r="2.5" fill="#e8f6ff"/></svg>
<div class="a" style="left:1268.0px;top:1193.0px;width:8.0px;height:2.0px;background:#7a7a80;border-radius:1px"></div>
<svg class="a" style="left:1727px;top:1172px" width="12" height="8"><path d="M1 6L6 1L11 6" fill="none" stroke="#222" stroke-width="1.2"/></svg>
<svg class="a" style="left:1756px;top:1167px" width="18" height="16" viewBox="0 0 18 16"><path d="M4 13C2 13 1 11.5 1 10S2 7 4 7C4 4 6.5 2.5 9 2.5C12 2.5 13.5 4.5 14 6.5C16 6.5 17 8 17 10S16 13 14 13Z" fill="none" stroke="#222" stroke-width="1.3"/><path d="M2 2L16 15" stroke="#222" stroke-width="1.3"/></svg>
<svg class="a" style="left:1788px;top:1166px" width="18" height="18" viewBox="0 0 18 18"><circle cx="8" cy="8" r="6.5" fill="none" stroke="#222" stroke-width="1.1"/><ellipse cx="8" cy="8" rx="3" ry="6.5" fill="none" stroke="#222" stroke-width="1"/><path d="M1.5 8H14.5" stroke="#222"/><circle cx="13" cy="13" r="4" fill="#e6e2ee" stroke="#222" stroke-width="1.1"/><path d="M10.5 15.5L15.5 10.5" stroke="#222"/></svg>
<svg class="a" style="left:1814px;top:1166px" width="18" height="18" viewBox="0 0 18 18"><path d="M1 6H4L8 2V14L4 10H1Z" fill="none" stroke="#222" stroke-width="1.1"/><circle cx="12.5" cy="12.5" r="4" fill="#222"/><path d="M11 11L14 14M14 11L11 14" stroke="#fff" stroke-width="1.1"/></svg>
<div class="t" style="left:1830px;width:70px;text-align:right;top:1161.2px;font-size:11.9px;color:#1a1a1a">7:38 AM</div>
<div class="t" style="left:1830px;width:70px;text-align:right;top:1177.9px;font-size:11.2px;color:#1a1a1a">3/25/2025</div>
<!--BOTTOMEND-->





</body></html>
